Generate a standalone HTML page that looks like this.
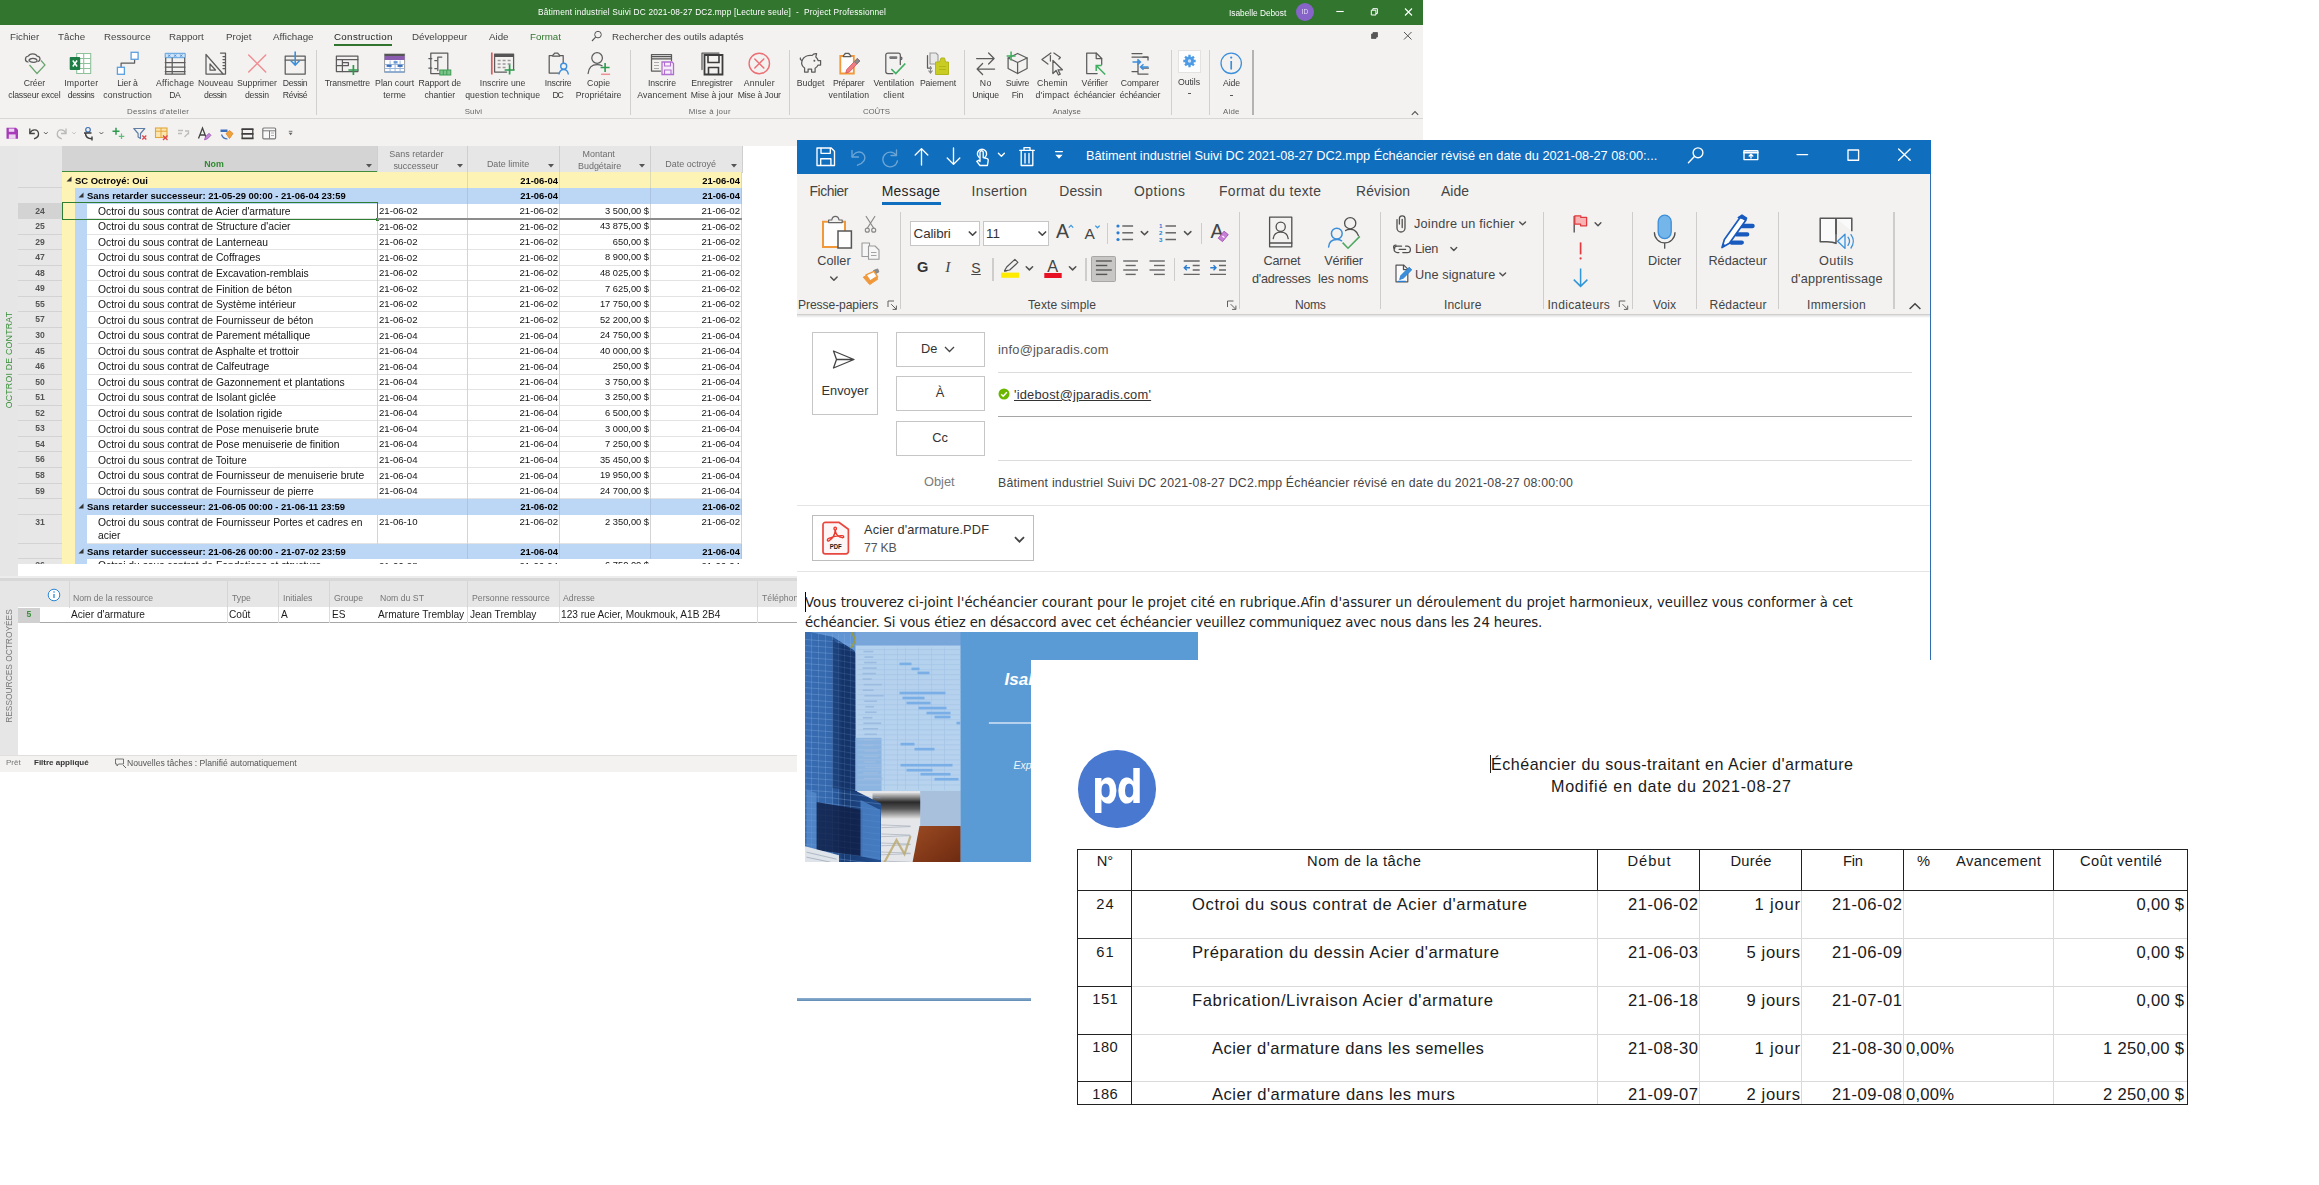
<!DOCTYPE html>
<html lang="fr"><head><meta charset="utf-8"><title>Échéancier sous-traitant</title>
<style>
*{box-sizing:border-box;margin:0;padding:0}
html,body{width:2319px;height:1185px;overflow:hidden;background:#fff}
body{position:relative;font-family:"Liberation Sans",sans-serif;color:#222}
.abs{position:absolute}
.t{position:absolute;white-space:pre;line-height:1}
.c{transform:translateX(-50%);text-align:center}
svg{position:absolute;overflow:visible}
/* ---------- Project ---------- */
#prj{position:absolute;left:0;top:0;width:1423px;height:772px;overflow:hidden;background:#fff;filter:blur(.35px)}
#prj .tb{position:absolute;left:0;top:0;width:1423px;height:25px;background:#31752f}
#prj .tabs{position:absolute;left:0;top:25px;width:1423px;height:23px;background:#f3f2f1}
#prj .rib{position:absolute;left:0;top:48px;width:1423px;height:71.4px;background:#f3f2f1;border-bottom:1.8px solid #d9d7d5}
#prj .qat{position:absolute;left:0;top:119px;width:1423px;height:27px;background:#f3f2f1}
.ptab{position:absolute;top:32.2px;font-size:9.75px;color:#444;white-space:pre;line-height:1}
.rl{position:absolute;font-size:8.6px;color:#555;white-space:pre;line-height:1;transform:translateX(-50%);text-align:center}
.gl{position:absolute;top:109px;font-size:7.6px;color:#666;white-space:pre;line-height:1;transform:translateX(-50%)}
.vsep{position:absolute;width:1px;background:#d2d0ce}
.row{position:absolute;left:18px;width:724px;height:15.56px}
.row .n{position:absolute;left:0;top:0;width:44px;height:100%;font-size:8.6px;font-weight:700;color:#555;text-align:center;line-height:14px;border-bottom:1px solid #d3d3d3}
.row .y{position:absolute;left:44px;top:0;width:13px;height:100%;background:#fdf3b5}
.row .b{position:absolute;left:57px;top:0;width:12px;height:100%;background:#bcd6f6}
.row .bd{position:absolute;left:69px;top:0;right:0;height:100%;border-bottom:1px solid #e3e3e3}
.row .nm,.row .d1,.row .d2,.row .m,.row .d3{position:absolute;top:2.2px;font-size:10.3px;line-height:11px;white-space:pre;color:#141414}
.row .nm{left:80px}
.row .d1,.row .d2,.row .d3{font-size:9.65px;top:1.5px}
.row .m{font-size:9.3px}
.row .d1{left:361px}
.row .d2{right:184px}
.row .m{right:93px}
.row .d3{right:2px}
.row .cl{position:absolute;top:0;width:1px;height:100%;background:#d4d4d4}
.grp{font-weight:700;font-size:9.45px !important;color:#000 !important;top:2.2px !important}
/* ---------- Outlook ---------- */
#olk{position:absolute;left:797px;top:140px;width:1134px;height:862px;overflow:hidden;background:#fff}
#olk .tb{position:absolute;left:0;top:0;width:1134px;height:34px;background:#106ebe}
#olk .tabs{position:absolute;left:0;top:34px;width:1134px;height:33px;background:#f3f2f1}
#olk .rib{position:absolute;left:0;top:67px;width:1134px;height:107.5px;background:#f3f2f1;border-bottom:1px solid #d0cecc}
#olk .ribsh{position:absolute;left:0;top:174.5px;width:1134px;height:3.5px;background:linear-gradient(rgba(0,0,0,.13),rgba(0,0,0,0))}
.otab{position:absolute;top:44.6px;font-size:13.9px;color:#444;white-space:pre;line-height:1}
.ol{position:absolute;font-size:12.6px;color:#444;white-space:pre;line-height:1}
.olc{transform:translateX(-50%);text-align:center}
.ogl{position:absolute;top:158.5px;font-size:12.2px;color:#444;white-space:pre;line-height:1;transform:translateX(-50%)}
.osep{position:absolute;top:80px;width:1px;height:84px;background:#d2d0ce}
.btn{position:absolute;border:1px solid #c6c6c6;background:#fff}
.hl{position:absolute;height:1px;background:#dcdcdc}
/* ---------- PDF ---------- */
#pdf{position:absolute;left:1031px;top:660px;width:1288px;height:525px;background:#fff;overflow:hidden}
.pt{position:absolute;white-space:pre;line-height:1;color:#1a1a1a}
</style></head><body>

<div id="prj">
<div class="tb"></div>
<div class="t c" style="left:712.09px;top:8.4px;font-size:8.3px;letter-spacing:0.18px;color:#fff">Bâtiment industriel Suivi DC 2021-08-27 DC2.mpp [Lecture seule]  -  Project Professionnel</div>
<div class="t" style="left:1229px;top:8.5px;font-size:8.3px;color:#fff">Isabelle Debost</div>
<div class="abs" style="left:1296px;top:3px;width:18px;height:18px;border-radius:50%;background:#8764c8"></div>
<div class="t c" style="left:1305px;top:8.8px;font-size:6.5px;color:#e8defa">ID</div>
<svg style="left:1334px;top:5px" width="84" height="14" viewBox="0 0 84 14"><path d="M2.300 6.500h7.400" stroke="#fff" stroke-width="1.100"/><path d="M37.300 5.200h4.600v4.800h-4.600z M38.800 5.200v-1.500h4.600v4.800h-1.500" fill="none" stroke="#fff" stroke-width="1"/><path d="M71 3.500l7 7M78 3.500l-7 7" stroke="#fff" stroke-width="1.100"/></svg>
<div class="tabs"></div>
<div class="ptab" style="left:10px">Fichier</div>
<div class="ptab" style="left:58px">Tâche</div>
<div class="ptab" style="left:104px">Ressource</div>
<div class="ptab" style="left:169px">Rapport</div>
<div class="ptab" style="left:226px">Projet</div>
<div class="ptab" style="left:273px">Affichage</div>
<div class="ptab" style="left:334px;color:#1e1e1e;letter-spacing:.33px">Construction</div>
<div class="ptab" style="left:412px">Développeur</div>
<div class="ptab" style="left:489px">Aide</div>
<div class="ptab" style="left:530px;color:#31752f">Format</div>
<div class="abs" style="left:334px;top:44px;width:58px;height:2px;background:#31752f"></div>
<svg style="left:591px;top:30px" width="12" height="12" viewBox="0 0 12 12"><circle cx="7" cy="4.6" r="3.3" fill="none" stroke="#555" stroke-width="1"/><path d="M4.6 7.2L1 11" stroke="#555" stroke-width="1.1"/></svg>
<div class="ptab" style="left:612px">Rechercher des outils adaptés</div>
<svg style="left:1369px;top:30px" width="48" height="12" viewBox="0 0 48 12"><path d="M2.5 4h4.5v4.5h-4.5z M4 4v-1.5h4.5v4.5h-1.5" fill="#555" stroke="#555" stroke-width=".8"/><path d="M35 2l7.5 7.5M42.5 2l-7.5 7.5" stroke="#555" stroke-width="1"/></svg>
<div class="rib"></div>
<div class="t c" style="left:34.46px;top:79.33px;font-size:8.7px;letter-spacing:-0.089px;color:#3a3a3a;font-weight:400">Créer</div>
<div class="t c" style="left:34.4px;top:91.33px;font-size:8.7px;letter-spacing:-0.209px;color:#3a3a3a;font-weight:400">classeur excel</div>
<div class="t c" style="left:81.31px;top:79.33px;font-size:8.7px;letter-spacing:0.23px;color:#3a3a3a;font-weight:400">Importer</div>
<div class="t c" style="left:80.99px;top:91.33px;font-size:8.7px;letter-spacing:-0.416px;color:#3a3a3a;font-weight:400">dessins</div>
<div class="t c" style="left:127.49px;top:79.33px;font-size:8.7px;letter-spacing:-0.213px;color:#3a3a3a;font-weight:400">Lier à</div>
<div class="t c" style="left:127.68px;top:91.33px;font-size:8.7px;letter-spacing:0.154px;color:#3a3a3a;font-weight:400">construction</div>
<div class="t c" style="left:175.12px;top:79.33px;font-size:8.7px;letter-spacing:0.235px;color:#3a3a3a;font-weight:400">Affichage</div>
<div class="t c" style="left:174.81px;top:91.33px;font-size:8.7px;letter-spacing:-0.386px;color:#3a3a3a;font-weight:400">DA</div>
<div class="t c" style="left:215.53px;top:79.33px;font-size:8.7px;letter-spacing:0.062px;color:#3a3a3a;font-weight:400">Nouveau</div>
<div class="t c" style="left:215.26px;top:91.33px;font-size:8.7px;letter-spacing:-0.47px;color:#3a3a3a;font-weight:400">dessin</div>
<div class="t c" style="left:256.99px;top:79.33px;font-size:8.7px;letter-spacing:-0.016px;color:#3a3a3a;font-weight:400">Supprimer</div>
<div class="t c" style="left:256.88px;top:91.33px;font-size:8.7px;letter-spacing:-0.23px;color:#3a3a3a;font-weight:400">dessin</div>
<div class="t c" style="left:295.02px;top:79.33px;font-size:8.7px;letter-spacing:-0.359px;color:#3a3a3a;font-weight:400">Dessin</div>
<div class="t c" style="left:295.02px;top:91.33px;font-size:8.7px;letter-spacing:-0.359px;color:#3a3a3a;font-weight:400">Révisé</div>
<div class="t c" style="left:347.35px;top:79.33px;font-size:8.7px;letter-spacing:-0.107px;color:#3a3a3a;font-weight:400">Transmettre</div>
<div class="t c" style="left:394.59px;top:79.33px;font-size:8.7px;letter-spacing:-0.019px;color:#3a3a3a;font-weight:400">Plan court</div>
<div class="t c" style="left:394.66px;top:91.33px;font-size:8.7px;letter-spacing:0.115px;color:#3a3a3a;font-weight:400">terme</div>
<div class="t c" style="left:439.77px;top:79.33px;font-size:8.7px;letter-spacing:-0.061px;color:#3a3a3a;font-weight:400">Rapport de</div>
<div class="t c" style="left:439.78px;top:91.33px;font-size:8.7px;letter-spacing:-0.05px;color:#3a3a3a;font-weight:400">chantier</div>
<div class="t c" style="left:502.62px;top:79.33px;font-size:8.7px;letter-spacing:0.031px;color:#3a3a3a;font-weight:400">Inscrire une</div>
<div class="t c" style="left:502.66px;top:91.33px;font-size:8.7px;letter-spacing:0.115px;color:#3a3a3a;font-weight:400">question technique</div>
<div class="t c" style="left:558.09px;top:79.33px;font-size:8.7px;letter-spacing:-0.217px;color:#3a3a3a;font-weight:400">Inscrire</div>
<div class="t c" style="left:557.57px;top:91.33px;font-size:8.7px;letter-spacing:-1.266px;color:#3a3a3a;font-weight:400">DC</div>
<div class="t c" style="left:598.63px;top:79.33px;font-size:8.7px;letter-spacing:0.067px;color:#3a3a3a;font-weight:400">Copie</div>
<div class="t c" style="left:598.64px;top:91.33px;font-size:8.7px;letter-spacing:0.075px;color:#3a3a3a;font-weight:400">Propriétaire</div>
<div class="t c" style="left:661.96px;top:79.33px;font-size:8.7px;letter-spacing:-0.075px;color:#3a3a3a;font-weight:400">Inscrire</div>
<div class="t c" style="left:662.07px;top:91.33px;font-size:8.7px;letter-spacing:0.144px;color:#3a3a3a;font-weight:400">Avancement</div>
<div class="t c" style="left:711.94px;top:79.33px;font-size:8.7px;letter-spacing:-0.115px;color:#3a3a3a;font-weight:400">Enregistrer</div>
<div class="t c" style="left:712.0px;top:91.33px;font-size:8.7px;letter-spacing:-0.005px;color:#3a3a3a;font-weight:400">Mise à jour</div>
<div class="t c" style="left:759.38px;top:79.33px;font-size:8.7px;letter-spacing:0.169px;color:#3a3a3a;font-weight:400">Annuler</div>
<div class="t c" style="left:759.22px;top:91.33px;font-size:8.7px;letter-spacing:-0.157px;color:#3a3a3a;font-weight:400">Mise à Jour</div>
<div class="t c" style="left:810.63px;top:79.33px;font-size:8.7px;letter-spacing:0.065px;color:#3a3a3a;font-weight:400">Budget</div>
<div class="t c" style="left:848.65px;top:79.33px;font-size:8.7px;letter-spacing:-0.307px;color:#3a3a3a;font-weight:400">Préparer</div>
<div class="t c" style="left:848.88px;top:91.33px;font-size:8.7px;letter-spacing:0.152px;color:#3a3a3a;font-weight:400">ventilation</div>
<div class="t c" style="left:893.83px;top:79.33px;font-size:8.7px;letter-spacing:0.055px;color:#3a3a3a;font-weight:400">Ventilation</div>
<div class="t c" style="left:893.87px;top:91.33px;font-size:8.7px;letter-spacing:0.138px;color:#3a3a3a;font-weight:400">client</div>
<div class="t c" style="left:937.97px;top:79.33px;font-size:8.7px;letter-spacing:-0.065px;color:#3a3a3a;font-weight:400">Paiement</div>
<div class="t c" style="left:985.89px;top:79.33px;font-size:8.7px;letter-spacing:0.579px;color:#3a3a3a;font-weight:400">No</div>
<div class="t c" style="left:985.53px;top:91.33px;font-size:8.7px;letter-spacing:-0.134px;color:#3a3a3a;font-weight:400">Unique</div>
<div class="t c" style="left:1017.5px;top:79.33px;font-size:8.7px;letter-spacing:-0.192px;color:#3a3a3a;font-weight:400">Suivre</div>
<div class="t c" style="left:1017.5px;top:91.33px;font-size:8.7px;letter-spacing:-0.193px;color:#3a3a3a;font-weight:400">Fin</div>
<div class="t c" style="left:1052.46px;top:79.33px;font-size:8.7px;letter-spacing:0.124px;color:#3a3a3a;font-weight:400">Chemin</div>
<div class="t c" style="left:1052.52px;top:91.33px;font-size:8.7px;letter-spacing:0.239px;color:#3a3a3a;font-weight:400">d'impact</div>
<div class="t c" style="left:1094.6px;top:79.33px;font-size:8.7px;letter-spacing:-0.194px;color:#3a3a3a;font-weight:400">Vérifier</div>
<div class="t c" style="left:1094.64px;top:91.33px;font-size:8.7px;letter-spacing:-0.129px;color:#3a3a3a;font-weight:400">échéancier</div>
<div class="t c" style="left:1139.99px;top:79.33px;font-size:8.7px;letter-spacing:-0.011px;color:#3a3a3a;font-weight:400">Comparer</div>
<div class="t c" style="left:1139.9px;top:91.33px;font-size:8.7px;letter-spacing:-0.207px;color:#3a3a3a;font-weight:400">échéancier</div>
<div class="t c" style="left:1231.43px;top:79.33px;font-size:8.7px;letter-spacing:-0.138px;color:#3a3a3a;font-weight:400">Aide</div>
<div class="t c" style="left:1188.98px;top:77.93px;font-size:8.7px;letter-spacing:-0.048px;color:#3a3a3a;font-weight:400">Outils</div>
<div class="t c" style="left:158.13px;top:108.18px;font-size:7.9px;letter-spacing:0.268px;color:#666;font-weight:400">Dessins d'atelier</div>
<div class="t c" style="left:473.32px;top:108.18px;font-size:7.9px;letter-spacing:0.044px;color:#666;font-weight:400">Suivi</div>
<div class="t c" style="left:709.87px;top:108.18px;font-size:7.9px;letter-spacing:0.336px;color:#666;font-weight:400">Mise à jour</div>
<div class="t c" style="left:876.42px;top:108.18px;font-size:7.9px;letter-spacing:-0.163px;color:#666;font-weight:400">COÛTS</div>
<div class="t c" style="left:1066.72px;top:108.18px;font-size:7.9px;letter-spacing:0.032px;color:#666;font-weight:400">Analyse</div>
<div class="t c" style="left:1231.31px;top:108.18px;font-size:7.9px;letter-spacing:0.229px;color:#666;font-weight:400">Aide</div>
<div class="vsep" style="left:316px;top:50px;height:65px"></div>
<div class="vsep" style="left:630px;top:50px;height:65px"></div>
<div class="vsep" style="left:788.6px;top:50px;height:65px"></div>
<div class="vsep" style="left:964.3px;top:50px;height:65px"></div>
<div class="vsep" style="left:1170.5px;top:50px;height:65px"></div>
<div class="vsep" style="left:1209px;top:50px;height:65px"></div>
<div class="vsep" style="left:1252.4px;top:50px;height:65px;background:#b5b3b1;width:1.3px"></div>
<div class="abs" style="left:1187.5px;top:93.3px;width:3.4px;height:1.1px;background:#555"></div><div class="abs" style="left:1230px;top:94.6px;width:3.4px;height:1.1px;background:#555"></div>
<svg style="left:1411px;top:110px" width="8" height="6" viewBox="0 0 8 6"><path d="M.8 4.800l3.200-3.200 3.200 3.200" stroke="#555" fill="none" stroke-width="1.100"/></svg>
<div class="abs" style="left:1178px;top:49.5px;width:23px;height:23px;background:#fdfdfd;border:1px solid #e4e2e0"></div>
<svg style="left:0;top:48px" width="1422" height="32" viewBox="0 48 1422 32"><g transform="translate(22.5 51.500)"><path d="M7 13.500l7.500 8.500 8-8.500-4-4.500" stroke="#6aa56e" fill="none" stroke-width="1.200"/><path d="M5.500 10.500c-3.500-.500-3.500-5.500.500-6 1-3 7.500-3 8.500 0 3.500 0 4 4.500 1 5.500" stroke="#5c5c5c" fill="none" stroke-width="1.250" stroke-linejoin="round" stroke-linecap="round"/><path d="M6.500 8.800c1-2.600 7-2.600 8 0s-7 2.800-8 0z" stroke="#5c5c5c" fill="none" stroke-width="1.250" stroke-linejoin="round" stroke-linecap="round" stroke-width="1.100"/></g><g transform="translate(69.2 51.500)"><path d="M7.500 2h14v20h-14z" fill="#fff" stroke="#8fc29b" stroke-width="1.100"/><path d="M7.500 7h14M7.500 12h14M7.500 17h14M14.500 2v20" stroke="#8fc29b" stroke-width="1.100"/><rect x=".5" y="5.500" width="10.500" height="13" rx="1" fill="#1d7d45"/><path d="M3.600 9l4.300 6M7.900 9l-4.300 6" stroke="#fff" stroke-width="1.500"/></g><g transform="translate(115.6 51.500)"><path d="M5.500 16v-4.500h13.500v-4" stroke="#5c5c5c" fill="none" stroke-width="1.250" stroke-linejoin="round" stroke-linecap="round"/><rect x="15.500" y=".8" width="7" height="7" fill="#fff" stroke="#5b9fe0" stroke-width="1.300"/><rect x="1.800" y="15.800" width="7" height="7" fill="#fff" stroke="#5b9fe0" stroke-width="1.300"/></g><g transform="translate(163.2 51.500)"><path d="M2 1.800h20v4.400h-20z" fill="#cfe3f7" stroke="#5b9fe0" stroke-width="1"/><path d="M5 3l2 2.200M7 3l-2 2.200M11 3l2 2.200M13 3l-2 2.200M17 3l2 2.200M19 3l-2 2.200" stroke="#3b82d0" stroke-width=".9"/><path d="M2.500 6.500v16M21.500 6.500v16M9 6.500v16M2 11h20M2 15.500h20M2 20h20M2 22.500h20" stroke="#5c5c5c" fill="none" stroke-width="1.250" stroke-linejoin="round" stroke-linecap="round" stroke-width="1.150"/></g><g transform="translate(203.5 51.500)"><path d="M2.500 3v19.500h17z" stroke="#5c5c5c" fill="none" stroke-width="1.250" stroke-linejoin="round" stroke-linecap="round" stroke-width="1.500"/><path d="M6.500 12.500v6h5.500z" stroke="#5c5c5c" fill="none" stroke-width="1.250" stroke-linejoin="round" stroke-linecap="round" stroke-width="1.200" fill="#999"/><path d="M17 1.500h5v21h-2.500M19.500 5h2.500M19.500 8h2.500M19.500 11h2.500M19.500 14h2.500M19.500 17h2.500" stroke="#5c5c5c" fill="none" stroke-width="1.250" stroke-linejoin="round" stroke-linecap="round" stroke-width="1"/></g><g transform="translate(245.2 51.500)"><path d="M3.500 3.500l17 17M20.500 3.500l-17 17" stroke="#ee8f93" stroke-width="1.500" stroke-linecap="round"/></g><g transform="translate(283.2 51.500)"><path d="M2 4.500h20v18h-20z" stroke="#5c5c5c" fill="none" stroke-width="1.250" stroke-linejoin="round" stroke-linecap="round" stroke="#4a4a4a" stroke-width="1.500"/><path d="M2 8.500h20" stroke="#5c5c5c" fill="none" stroke-width="1.250" stroke-linejoin="round" stroke-linecap="round" stroke-width="1"/><path d="M12 0v13M7.500 9l4.500 4.500 4.500-4.500" stroke="#3d8fdc" fill="none" stroke-width="1.600"/></g><g transform="translate(335.4 51.500)"><path d="M1 4.500h21.500v15.500h-21.500z" stroke="#5c5c5c" fill="none" stroke-width="1.250" stroke-linejoin="round" stroke-linecap="round" stroke-width="1.400"/><path d="M1 8h21.500M1 14h12M7 8v12M7 11h6v3" stroke="#5c5c5c" fill="none" stroke-width="1.250" stroke-linejoin="round" stroke-linecap="round" stroke-width="1"/><path d="M18 13.500v10M13 18.500h10" stroke="#2e9a4d" stroke-width="1.700"/></g><g transform="translate(382.6 51.500)"><rect x="2" y="2.500" width="20" height="18" fill="#fff" stroke="#9b9b9b" stroke-width="1"/><rect x="2" y="2.500" width="20" height="2" fill="#555"/><rect x="2" y="4.500" width="20" height="4" fill="#8a5db0"/><path d="M2 13h20M2 17h20M7.500 9v11M12.500 9v11M17.500 9v11" stroke="#9db8dc" stroke-width="1"/><rect x="4" y="13.200" width="5" height="2.200" fill="#3d6fb8"/><rect x="11" y="9.600" width="4" height="2.400" fill="#6a9ad6"/><rect x="15" y="13.200" width="5" height="2.200" fill="#3d6fb8"/><path d="M2 20.500h20" stroke="#6a9ad6" stroke-width="1.200"/></g><g transform="translate(427.8 51.500)"><path d="M3 1.500h17v17M3 1.500v20.500h9" stroke="#5c5c5c" fill="none" stroke-width="1.250" stroke-linejoin="round" stroke-linecap="round" stroke="#444" stroke-width="1.500"/><path d="M1 7h3M1 16.500h3" stroke="#5c5c5c" fill="none" stroke-width="1.250" stroke-linejoin="round" stroke-linecap="round" stroke="#444" stroke-width="1.500"/><path d="M14 5.500h-4v13.500" stroke="#5c5c5c" fill="none" stroke-width="1.250" stroke-linejoin="round" stroke-linecap="round" stroke="#444" stroke-width="1.400"/><path d="M7 9h2M7 17h2" stroke="#5c5c5c" fill="none" stroke-width="1.250" stroke-linejoin="round" stroke-linecap="round" stroke-width=".9"/><rect x="12" y="18.500" width="11" height="5" fill="#7cc48a" stroke="#3a9b52" stroke-width="1"/><path d="M15.500 18.500v5M19 18.500v5" stroke="#3a9b52" stroke-width=".9"/></g><g transform="translate(490.6 51.500)"><path d="M1.200 1v22" stroke="#e0575b" stroke-width="1.700"/><path d="M4 2.500h19v15.500M4 2.500v18h12" stroke="#5c5c5c" fill="none" stroke-width="1.250" stroke-linejoin="round" stroke-linecap="round" stroke-width="1.300"/><rect x="4" y="2.500" width="19" height="3" fill="#555"/><path d="M7 9h3M12 9h3M17 9h3M7 12.500h3M12 12.500h3M17 12.500h3M7 16h3M12 16h3" stroke="#9a9a9a" stroke-width="1.300"/><path d="M19 13v10M14 18.500h10" stroke="#2e9a4d" stroke-width="1.700"/></g><g transform="translate(546.2 51.500)"><path d="M3 4h14v17.500h-14z" stroke="#5c5c5c" fill="none" stroke-width="1.250" stroke-linejoin="round" stroke-linecap="round" stroke-width="1.400"/><path d="M6.500 4.500c0-2 1.500-1.500 2-3h3c.5 1.500 2 1 2 3z" fill="#f3f2f1" stroke="#5c5c5c" fill="none" stroke-width="1.250" stroke-linejoin="round" stroke-linecap="round" stroke-width="1.200"/><circle cx="17.500" cy="14.800" r="3" fill="#f3f2f1" stroke="#3d8fdc" stroke-width="1.400"/><path d="M12.800 23c.500-3.500 2.500-5 4.700-5s4.200 1.500 4.700 5" fill="#f3f2f1" stroke="#3d8fdc" stroke-width="1.400"/></g><g transform="translate(586.6 51.500)"><circle cx="10.500" cy="6.500" r="5.300" stroke="#5c5c5c" fill="none" stroke-width="1.250" stroke-linejoin="round" stroke-linecap="round" stroke-width="1.350"/><path d="M1.500 22c.5-6 4-9 9-9 2 0 3.500.4 5 1.300" stroke="#5c5c5c" fill="none" stroke-width="1.250" stroke-linejoin="round" stroke-linecap="round" stroke-width="1.350"/><path d="M18.500 11.500v9M14 16h9" stroke="#2e9a4d" stroke-width="1.600"/><path d="M14.500 22.800h9" stroke="#ee8f93" stroke-width="1.500"/></g><g transform="translate(650 51.500)"><path d="M1.500 3h20v6M1.500 3v16.500h9" stroke="#5c5c5c" fill="none" stroke-width="1.250" stroke-linejoin="round" stroke-linecap="round" stroke-width="1.300"/><path d="M1.500 5.200h20M1.500 7.400h20" stroke="#555" stroke-width="1.300"/><path d="M4 11h5M4 14h5M4 17h5" stroke="#aaa" stroke-width="1.100"/><path d="M12 10.500h10l1.500 1.500v11h-11.500z" fill="#f7eefb" stroke="#b06fd0" stroke-width="1.300"/><path d="M14.500 10.500v4h6v-4M14.500 23v-4.500h6.500v4.500" stroke="#b06fd0" fill="none" stroke-width="1.100"/></g><g transform="translate(700 51.500)"><path d="M2 18v-16.500h17" stroke="#5c5c5c" fill="none" stroke-width="1.250" stroke-linejoin="round" stroke-linecap="round" stroke="#555" stroke-width="1.400"/><path d="M4.500 3.500h18v19.500h-18z" fill="#f3f2f1" stroke="#3c3c3c" stroke-width="1.800"/><path d="M8 4v7h11v-7M8.500 22.500v-6.500h10v6.500" stroke="#3c3c3c" fill="none" stroke-width="1.600"/></g><g transform="translate(747.3 51.500)"><circle cx="12" cy="12" r="10.200" fill="none" stroke="#ec6f74" stroke-width="1.400"/><path d="M7.500 7.500l9 9M16.500 7.500l-9 9" stroke="#ec6f74" stroke-width="1.500" stroke-linecap="round"/></g><g transform="translate(798.6 51.500)"><path d="M3.500 9c1.500-4 6-5.500 10-5 1-1.500 2.800-2 4.500-1.800l-.8 3.300c1.300 1 2 2.400 2.300 3.500h2.500v4.500h-2.500c-.7 1.500-1.700 2.500-3 3.200v3.800h-3.500v-2.800h-3.500v2.800h-3.500v-4c-2.500-1.700-3.500-4.500-2.500-7.500z" stroke="#5c5c5c" fill="none" stroke-width="1.250" stroke-linejoin="round" stroke-linecap="round" stroke-width="1.350"/><circle cx="15.800" cy="9.300" r="1" fill="#5c5c5c"/><path d="M3.300 9c-1-.3-1.800-1.200-1.500-2.500" stroke="#5c5c5c" fill="none" stroke-width="1.250" stroke-linejoin="round" stroke-linecap="round" stroke-width="1.100"/></g><g transform="translate(836.8 51.500)"><path d="M3.500 4.500h13.500v17.500h-13.500z" fill="#fdfdfd" stroke="#f0983a" stroke-width="1.800"/><path d="M6.500 5c0-2 1.500-1.500 2-3.200h3.500c.5 1.700 2 1.200 2 3.200z" fill="#f3f2f1" stroke="#5c5c5c" fill="none" stroke-width="1.250" stroke-linejoin="round" stroke-linecap="round" stroke-width="1.100"/><path d="M9 21.500l1-3.500 10.500-11 2.500 2.500-10.500 11z" fill="#ee7d82" stroke="#d9585e" stroke-width=".9"/><path d="M17.500 10l3-3 2.500 2.500-3 3z" fill="#8a8a8a" stroke="#777" stroke-width=".8"/></g><g transform="translate(881.8 51.500)"><path d="M18.500 13v-9.500a2 2 0 0 0-2-2h-10.500a2 2 0 0 0-2 2v16.500a2 2 0 0 0 2 2h5" stroke="#5c5c5c" fill="none" stroke-width="1.250" stroke-linejoin="round" stroke-linecap="round" stroke="#4a4a4a" stroke-width="1.600"/><rect x="7.500" y="4.800" width="8" height="2.600" rx=".8" fill="#777"/><path d="M19 5.500c1.500 0 1.500 2.500 0 2.500" stroke="#5c5c5c" fill="none" stroke-width="1.250" stroke-linejoin="round" stroke-linecap="round" stroke-width="1.200"/><path d="M9.500 17.500l4.500 4.500 9.500-10" stroke="#3fae5f" fill="none" stroke-width="1.700"/></g><g transform="translate(926 51.500)"><path d="M4 1.500h6l2 2v9h-8z" fill="#e9e9e9" stroke="#9a9a9a" stroke-width="1.100"/><path d="M1.500 4v12.500h4" stroke="#5c5c5c" fill="none" stroke-width="1.250" stroke-linejoin="round" stroke-linecap="round" stroke="#9a9a9a" stroke-width="1.100"/><path d="M4.500 14.500v6.500M2.500 19l2 2.500 2-2.500" stroke="#8a8a8a" fill="none" stroke-width="1.200"/><path d="M9.500 10.500h4l1.500-4h3.500l1 4h3v12.500h-13z" fill="#c9cc22" stroke="#b3b61a" stroke-width="1"/><path d="M13 15h7M13 18h7" stroke="#b3b61a" stroke-width="1"/></g><g transform="translate(973.6 51.500)"><path d="M3 7h17.500M15 1.500l5.500 5.500-5.500 5.500" stroke="#5c5c5c" fill="none" stroke-width="1.250" stroke-linejoin="round" stroke-linecap="round" stroke="#444" stroke-width="1.500"/><path d="M21 17.500h-17.500M9 12l-5.500 5.500 5.500 5.500" stroke="#5c5c5c" fill="none" stroke-width="1.250" stroke-linejoin="round" stroke-linecap="round" stroke="#444" stroke-width="1.500"/></g><g transform="translate(1005.6 51.500)"><path d="M12 2l9.500 4.500v10.500l-9.500 5-9.500-5v-10.500z" stroke="#5c5c5c" fill="none" stroke-width="1.250" stroke-linejoin="round" stroke-linecap="round" stroke-width="1.350"/><path d="M2.500 6.500l9.500 4.500 9.500-4.500M12 11v11" stroke="#5c5c5c" fill="none" stroke-width="1.250" stroke-linejoin="round" stroke-linecap="round" stroke-width="1.350"/><path d="M5.500 0v9M1 4.500h9" stroke="#3fae5f" stroke-width="1.500"/></g><g transform="translate(1040.4 51.500)"><path d="M10.500 1.500l-9 6.500 6 4.500M13.500 1.500l6.500 4.500-1.500 1.500" stroke="#5c5c5c" fill="none" stroke-width="1.250" stroke-linejoin="round" stroke-linecap="round" stroke="#8a8a8a" stroke-width="1.200"/><path d="M10 4v5.500" stroke="#5c5c5c" fill="none" stroke-width="1.250" stroke-linejoin="round" stroke-linecap="round" stroke="#8a8a8a" stroke-width="1.100"/><path d="M12.500 9v13l3.200-3 2.300 4.500 1.800-.9-2.200-4.300h4.400z" fill="#f3f2f1" stroke="#5c5c5c" fill="none" stroke-width="1.250" stroke-linejoin="round" stroke-linecap="round" stroke-width="1.250"/></g><g transform="translate(1082.7 51.500)"><path d="M4 1.500h9.500l5.500 5.500v6M4 1.500v20.500h10.500" stroke="#5c5c5c" fill="none" stroke-width="1.250" stroke-linejoin="round" stroke-linecap="round" stroke="#8a8a8a" stroke-width="1.350"/><path d="M13.500 1.500v5.500h5.500" stroke="#5c5c5c" fill="none" stroke-width="1.250" stroke-linejoin="round" stroke-linecap="round" stroke="#8a8a8a" stroke-width="1.100"/><path d="M22.500 23l-9-9M13.500 19.500v-5.500h5.500" stroke="#3fae5f" fill="none" stroke-width="1.500"/></g><g transform="translate(1128 51.500)"><path d="M4 2h10M4 5.500h16M10 9v13.500h10M4 20h6" stroke="#5c5c5c" fill="none" stroke-width="1.250" stroke-linejoin="round" stroke-linecap="round" stroke="#9a9a9a" stroke-width="1.100"/><path d="M15 5.500h5v3M14 16.500h6.500" stroke="#5c5c5c" fill="none" stroke-width="1.250" stroke-linejoin="round" stroke-linecap="round" stroke="#9a9a9a" stroke-width="1.100"/><path d="M4.500 10.500h8M9.500 7.800l3 2.700-3 2.700" stroke="#3d8fdc" fill="none" stroke-width="1.400"/><path d="M20.500 15.500h-8M15.500 12.800l-3 2.700 3 2.700" stroke="#3d8fdc" fill="none" stroke-width="1.400"/></g><g transform="translate(1189.500 61)"><circle r="4.600" fill="#4d9be6"/><g stroke="#4d9be6" stroke-width="2.300"><path d="M0-6.200v12.400M-6.200 0h12.400M-4.400-4.400l8.800 8.800M4.400-4.400l-8.800 8.800"/></g><circle r="1.700" fill="#cfe3f7"/></g><circle cx="1231.200" cy="63.300" r="10.200" fill="none" stroke="#3d8fdc" stroke-width="1.300"/><path d="M1231.200 61v8.500" stroke="#3d8fdc" stroke-width="1.700"/><circle cx="1231.200" cy="57.600" r="1.100" fill="#3d8fdc"/></svg>
<div class="qat"></div>
<svg style="left:0;top:119px" width="320" height="27" viewBox="0 119 320 27"><path d="M6.500 127.800h9.500l2 2v9h-11.500z" fill="#a63ab8"/><rect x="8.800" y="128.600" width="5.500" height="3.200" fill="#ecd2f1"/><rect x="8.800" y="134.400" width="6.800" height="4.400" fill="#ecd2f1"/><path d="M29.800 128.500v5h5" stroke="#444" fill="none" stroke-width="1.300"/><path d="M30 133.300c2-4.800 8-4.200 8.500.2.300 2.600-1.800 4.500-4.500 5.300" stroke="#444" fill="none" stroke-width="1.300"/><path d="M44 132.200l1.800 1.800 1.800-1.800" stroke="#555" fill="none" stroke-width="1"/><path d="M66 128.500v5h-5" stroke="#b9b9b9" fill="none" stroke-width="1.300"/><path d="M65.800 133.300c-2-4.800-8-4.200-8.500.2-.3 2.600 1.800 4.500 4.500 5.300" stroke="#b9b9b9" fill="none" stroke-width="1.300"/><path d="M72.200 132.200l1.800 1.800 1.800-1.800" stroke="#c4c4c4" fill="none" stroke-width="1"/><circle cx="88" cy="129.800" r="2.300" fill="#f3f2f1" stroke="#3d6fb8" stroke-width="1.200"/><path d="M84 133h7.500M85.500 133c0 4 2 5.800 6.500 5.800M92 136.600v4" stroke="#3c3c3c" fill="none" stroke-width="1.400"/><path d="M99.600 132.200l1.800 1.800 1.800-1.800" stroke="#555" fill="none" stroke-width="1"/><path d="M116 127.800v7M112.500 131.300h7" stroke="#2e9a4d" stroke-width="1.500"/><path d="M121.500 133.500v5.500M118.800 136.300h5.500" stroke="#5fbf78" stroke-width="1.200"/><path d="M133.800 128.500h11l-4.300 5v5l-2.400-1.500v-3.500z" fill="none" stroke="#5f7fa6" stroke-width="1.200" stroke-linejoin="round"/><path d="M142.300 135.500l4 4M146.300 135.500l-4 4" stroke="#e0474c" stroke-width="1.300"/><rect x="155.500" y="128" width="11.500" height="9.500" fill="#fbe6b0" stroke="#e2a63a" stroke-width="1.100"/><path d="M155.500 131.200h11.500M161 128v9.500" stroke="#e2a63a" stroke-width="1"/><path d="M163 135.500l4.500 4.500M167.500 135.500l-4.500 4.500" stroke="#e0474c" stroke-width="1.300"/><path d="M178 130.500h5M178 133.500h4M185 131h3.500v3.500M184.500 137l4-4" stroke="#bdbdbd" fill="none" stroke-width="1.300"/><path d="M198.500 138.500l4-10.500 4 10.500M200 135h5" stroke="#444" fill="none" stroke-width="1.300"/><path d="M204.500 139.800l1-3 3.500-3.500 2 2-3.500 3.500z" fill="#c58ad6" stroke="#9a4db5" stroke-width=".8"/><path d="M220.500 129.500h7v2.500h-7z" fill="#3d6fb8"/><path d="M226 133.500l3.500-3 3.500 3-3.500 5z" fill="#f0a23a" stroke="#d9842a" stroke-width=".8"/><path d="M221.500 134.500c1 3 3.500 4.500 6 4.500" stroke="#3d6fb8" fill="none" stroke-width="1.200"/><path d="M241.500 129.200h12M241.500 133.800h12M241.500 138.400h12" stroke="#3c3c3c" stroke-width="1.700"/><path d="M242.200 129v9.500M252.800 129v9.500" stroke="#3c3c3c" stroke-width="1.200"/><rect x="262.800" y="128" width="12.800" height="10.800" rx="1" fill="#f8f8f8" stroke="#7a7a7a" stroke-width="1.200"/><path d="M262.800 130.800h12.800M269.500 130.800v8" stroke="#7a7a7a" stroke-width="1"/><path d="M271 133h3M271 135.500h3" stroke="#9a9a9a" stroke-width=".8"/><path d="M288.800 131.300h3.600" stroke="#666" stroke-width=".9"/><path d="M288.600 132.800h4l-2 2.400z" fill="#666"/></svg>
<div class="abs" style="left:0;top:146px;width:18px;height:609px;background:#e6e6e6"></div>
<div class="abs" style="left:18px;top:146px;width:44px;height:418.5px;background:#e7e7e7"></div>
<div class="t" style="left:9px;top:360px;font-size:8.8px;color:#3a8f3a;letter-spacing:.2px;transform:translate(-50%,-50%) rotate(-90deg)">OCTROI DE CONTRAT</div>
<div class="t" style="left:9px;top:666px;font-size:8.4px;color:#7a7a7a;letter-spacing:0;transform:translate(-50%,-50%) rotate(-90deg)">RESSOURCES OCTROYÉES</div>
<div class="abs" style="left:62px;top:146px;width:315px;height:27px;background:#d4d4d4;border-bottom:2px solid #3f8a3d"></div>
<div class="abs" style="left:377px;top:146px;width:365px;height:27px;background:#e6e6e6;border-bottom:1px solid #bdbdbd"></div>
<div class="abs" style="left:377px;top:146px;width:1px;height:27px;background:#cfcfcf"></div>
<div class="abs" style="left:467px;top:146px;width:1px;height:27px;background:#cfcfcf"></div>
<div class="abs" style="left:559px;top:146px;width:1px;height:27px;background:#cfcfcf"></div>
<div class="abs" style="left:650px;top:146px;width:1px;height:27px;background:#cfcfcf"></div>
<div class="abs" style="left:742px;top:146px;width:1px;height:27px;background:#cfcfcf"></div>
<div class="t c" style="left:214px;top:160px;font-size:8.8px;font-weight:700;color:#2f8a32">Nom</div>
<div class="t c" style="left:416.4px;top:150.2px;font-size:8.95px;color:#6c6c6c">Sans retarder</div>
<div class="t c" style="left:416px;top:161.6px;font-size:8.95px;color:#6c6c6c">successeur</div>
<div class="t c" style="left:508px;top:160px;font-size:8.95px;color:#6c6c6c">Date limite</div>
<div class="t c" style="left:598.7px;top:150.2px;font-size:8.95px;color:#6c6c6c">Montant</div>
<div class="t c" style="left:599.6px;top:161.6px;font-size:8.95px;color:#6c6c6c">Budgétaire</div>
<div class="t c" style="left:690.7px;top:160px;font-size:8.95px;color:#6c6c6c">Date octroyé</div>
<svg style="left:366px;top:164px" width="6" height="4" viewBox="0 0 6 4"><path d="M0 0h6L3 3.6z" fill="#555"/></svg>
<svg style="left:457px;top:164px" width="6" height="4" viewBox="0 0 6 4"><path d="M0 0h6L3 3.6z" fill="#555"/></svg>
<svg style="left:548px;top:164px" width="6" height="4" viewBox="0 0 6 4"><path d="M0 0h6L3 3.6z" fill="#555"/></svg>
<svg style="left:639px;top:164px" width="6" height="4" viewBox="0 0 6 4"><path d="M0 0h6L3 3.6z" fill="#555"/></svg>
<svg style="left:731px;top:164px" width="6" height="4" viewBox="0 0 6 4"><path d="M0 0h6L3 3.6z" fill="#555"/></svg>
<div class="row" style="top:172.4px;height:15.56px"><div class="n"></div><div class="abs" style="left:44px;top:0;right:0;height:100%;background:#fdf3b5"></div><svg style="left:48px;top:4px" width="6" height="6" viewBox="0 0 6 6"><path d="M5.5 .5v5h-5z" fill="#333"/></svg><div class="nm grp" style="left:57px">SC Octroyé: Oui</div><div class="d2 grp">21-06-04</div><div class="d3 grp">21-06-04</div><div class="cl" style="left:449px;background:rgba(120,130,150,.22)"></div><div class="cl" style="left:541px;background:rgba(120,130,150,.22)"></div><div class="cl" style="left:632px;background:rgba(120,130,150,.22)"></div><div class="cl" style="left:723px;background:rgba(120,130,150,.22)"></div></div>
<div class="row" style="top:187.96px;height:15.56px"><div class="n"></div><div class="y"></div><div class="abs" style="left:57px;top:0;right:0;height:100%;background:#bcd6f6"></div><svg style="left:60px;top:4px" width="6" height="6" viewBox="0 0 6 6"><path d="M5.5 .5v5h-5z" fill="#333"/></svg><div class="nm grp" style="left:69px">Sans retarder successeur: 21-05-29 00:00 - 21-06-04 23:59</div><div class="d2 grp">21-06-04</div><div class="d3 grp">21-06-04</div><div class="cl" style="left:449px;background:rgba(120,130,150,.22)"></div><div class="cl" style="left:541px;background:rgba(120,130,150,.22)"></div><div class="cl" style="left:632px;background:rgba(120,130,150,.22)"></div><div class="cl" style="left:723px;background:rgba(120,130,150,.22)"></div></div>
<div class="row" style="top:203.52px;height:15.56px"><div class="n" style="background:#d3d3d3">24</div><div class="y"></div><div class="b"></div><div class="bd"></div><div class="cl" style="left:359px"></div><div class="cl" style="left:449px"></div><div class="cl" style="left:541px"></div><div class="cl" style="left:632px"></div><div class="cl" style="left:723px"></div><div class="nm">Octroi du sous contrat de Acier d'armature</div><div class="d1">21-06-02</div><div class="d2">21-06-02</div><div class="m">3 500,00 $</div><div class="d3">21-06-02</div></div>
<div class="row" style="top:219.08px;height:15.56px"><div class="n">25</div><div class="y"></div><div class="b"></div><div class="bd"></div><div class="cl" style="left:359px"></div><div class="cl" style="left:449px"></div><div class="cl" style="left:541px"></div><div class="cl" style="left:632px"></div><div class="cl" style="left:723px"></div><div class="nm">Octroi du sous contrat de Structure d'acier</div><div class="d1">21-06-02</div><div class="d2">21-06-02</div><div class="m">43 875,00 $</div><div class="d3">21-06-02</div></div>
<div class="row" style="top:234.64px;height:15.56px"><div class="n">29</div><div class="y"></div><div class="b"></div><div class="bd"></div><div class="cl" style="left:359px"></div><div class="cl" style="left:449px"></div><div class="cl" style="left:541px"></div><div class="cl" style="left:632px"></div><div class="cl" style="left:723px"></div><div class="nm">Octroi du sous contrat de Lanterneau</div><div class="d1">21-06-02</div><div class="d2">21-06-02</div><div class="m">650,00 $</div><div class="d3">21-06-02</div></div>
<div class="row" style="top:250.2px;height:15.56px"><div class="n">47</div><div class="y"></div><div class="b"></div><div class="bd"></div><div class="cl" style="left:359px"></div><div class="cl" style="left:449px"></div><div class="cl" style="left:541px"></div><div class="cl" style="left:632px"></div><div class="cl" style="left:723px"></div><div class="nm">Octroi du sous contrat de Coffrages</div><div class="d1">21-06-02</div><div class="d2">21-06-02</div><div class="m">8 900,00 $</div><div class="d3">21-06-02</div></div>
<div class="row" style="top:265.76px;height:15.56px"><div class="n">48</div><div class="y"></div><div class="b"></div><div class="bd"></div><div class="cl" style="left:359px"></div><div class="cl" style="left:449px"></div><div class="cl" style="left:541px"></div><div class="cl" style="left:632px"></div><div class="cl" style="left:723px"></div><div class="nm">Octroi du sous contrat de Excavation-remblais</div><div class="d1">21-06-02</div><div class="d2">21-06-02</div><div class="m">48 025,00 $</div><div class="d3">21-06-02</div></div>
<div class="row" style="top:281.32px;height:15.56px"><div class="n">49</div><div class="y"></div><div class="b"></div><div class="bd"></div><div class="cl" style="left:359px"></div><div class="cl" style="left:449px"></div><div class="cl" style="left:541px"></div><div class="cl" style="left:632px"></div><div class="cl" style="left:723px"></div><div class="nm">Octroi du sous contrat de Finition de béton</div><div class="d1">21-06-02</div><div class="d2">21-06-02</div><div class="m">7 625,00 $</div><div class="d3">21-06-02</div></div>
<div class="row" style="top:296.88px;height:15.56px"><div class="n">55</div><div class="y"></div><div class="b"></div><div class="bd"></div><div class="cl" style="left:359px"></div><div class="cl" style="left:449px"></div><div class="cl" style="left:541px"></div><div class="cl" style="left:632px"></div><div class="cl" style="left:723px"></div><div class="nm">Octroi du sous contrat de Système intérieur</div><div class="d1">21-06-02</div><div class="d2">21-06-02</div><div class="m">17 750,00 $</div><div class="d3">21-06-02</div></div>
<div class="row" style="top:312.44px;height:15.56px"><div class="n">57</div><div class="y"></div><div class="b"></div><div class="bd"></div><div class="cl" style="left:359px"></div><div class="cl" style="left:449px"></div><div class="cl" style="left:541px"></div><div class="cl" style="left:632px"></div><div class="cl" style="left:723px"></div><div class="nm">Octroi du sous contrat de Fournisseur de béton</div><div class="d1">21-06-02</div><div class="d2">21-06-02</div><div class="m">52 200,00 $</div><div class="d3">21-06-02</div></div>
<div class="row" style="top:328.0px;height:15.56px"><div class="n">30</div><div class="y"></div><div class="b"></div><div class="bd"></div><div class="cl" style="left:359px"></div><div class="cl" style="left:449px"></div><div class="cl" style="left:541px"></div><div class="cl" style="left:632px"></div><div class="cl" style="left:723px"></div><div class="nm">Octroi du sous contrat de Parement métallique</div><div class="d1">21-06-04</div><div class="d2">21-06-04</div><div class="m">24 750,00 $</div><div class="d3">21-06-04</div></div>
<div class="row" style="top:343.56px;height:15.56px"><div class="n">45</div><div class="y"></div><div class="b"></div><div class="bd"></div><div class="cl" style="left:359px"></div><div class="cl" style="left:449px"></div><div class="cl" style="left:541px"></div><div class="cl" style="left:632px"></div><div class="cl" style="left:723px"></div><div class="nm">Octroi du sous contrat de Asphalte et trottoir</div><div class="d1">21-06-04</div><div class="d2">21-06-04</div><div class="m">40 000,00 $</div><div class="d3">21-06-04</div></div>
<div class="row" style="top:359.12px;height:15.56px"><div class="n">46</div><div class="y"></div><div class="b"></div><div class="bd"></div><div class="cl" style="left:359px"></div><div class="cl" style="left:449px"></div><div class="cl" style="left:541px"></div><div class="cl" style="left:632px"></div><div class="cl" style="left:723px"></div><div class="nm">Octroi du sous contrat de Calfeutrage</div><div class="d1">21-06-04</div><div class="d2">21-06-04</div><div class="m">250,00 $</div><div class="d3">21-06-04</div></div>
<div class="row" style="top:374.68px;height:15.56px"><div class="n">50</div><div class="y"></div><div class="b"></div><div class="bd"></div><div class="cl" style="left:359px"></div><div class="cl" style="left:449px"></div><div class="cl" style="left:541px"></div><div class="cl" style="left:632px"></div><div class="cl" style="left:723px"></div><div class="nm">Octroi du sous contrat de Gazonnement et plantations</div><div class="d1">21-06-04</div><div class="d2">21-06-04</div><div class="m">3 750,00 $</div><div class="d3">21-06-04</div></div>
<div class="row" style="top:390.24px;height:15.56px"><div class="n">51</div><div class="y"></div><div class="b"></div><div class="bd"></div><div class="cl" style="left:359px"></div><div class="cl" style="left:449px"></div><div class="cl" style="left:541px"></div><div class="cl" style="left:632px"></div><div class="cl" style="left:723px"></div><div class="nm">Octroi du sous contrat de Isolant giclée</div><div class="d1">21-06-04</div><div class="d2">21-06-04</div><div class="m">3 250,00 $</div><div class="d3">21-06-04</div></div>
<div class="row" style="top:405.8px;height:15.56px"><div class="n">52</div><div class="y"></div><div class="b"></div><div class="bd"></div><div class="cl" style="left:359px"></div><div class="cl" style="left:449px"></div><div class="cl" style="left:541px"></div><div class="cl" style="left:632px"></div><div class="cl" style="left:723px"></div><div class="nm">Octroi du sous contrat de Isolation rigide</div><div class="d1">21-06-04</div><div class="d2">21-06-04</div><div class="m">6 500,00 $</div><div class="d3">21-06-04</div></div>
<div class="row" style="top:421.36px;height:15.56px"><div class="n">53</div><div class="y"></div><div class="b"></div><div class="bd"></div><div class="cl" style="left:359px"></div><div class="cl" style="left:449px"></div><div class="cl" style="left:541px"></div><div class="cl" style="left:632px"></div><div class="cl" style="left:723px"></div><div class="nm">Octroi du sous contrat de Pose menuiserie brute</div><div class="d1">21-06-04</div><div class="d2">21-06-04</div><div class="m">3 000,00 $</div><div class="d3">21-06-04</div></div>
<div class="row" style="top:436.92px;height:15.56px"><div class="n">54</div><div class="y"></div><div class="b"></div><div class="bd"></div><div class="cl" style="left:359px"></div><div class="cl" style="left:449px"></div><div class="cl" style="left:541px"></div><div class="cl" style="left:632px"></div><div class="cl" style="left:723px"></div><div class="nm">Octroi du sous contrat de Pose menuiserie de finition</div><div class="d1">21-06-04</div><div class="d2">21-06-04</div><div class="m">7 250,00 $</div><div class="d3">21-06-04</div></div>
<div class="row" style="top:452.48px;height:15.56px"><div class="n">56</div><div class="y"></div><div class="b"></div><div class="bd"></div><div class="cl" style="left:359px"></div><div class="cl" style="left:449px"></div><div class="cl" style="left:541px"></div><div class="cl" style="left:632px"></div><div class="cl" style="left:723px"></div><div class="nm">Octroi du sous contrat de Toiture</div><div class="d1">21-06-04</div><div class="d2">21-06-04</div><div class="m">35 450,00 $</div><div class="d3">21-06-04</div></div>
<div class="row" style="top:468.04px;height:15.56px"><div class="n">58</div><div class="y"></div><div class="b"></div><div class="bd"></div><div class="cl" style="left:359px"></div><div class="cl" style="left:449px"></div><div class="cl" style="left:541px"></div><div class="cl" style="left:632px"></div><div class="cl" style="left:723px"></div><div class="nm">Octroi du sous contrat de Fournisseur de menuiserie brute</div><div class="d1">21-06-04</div><div class="d2">21-06-04</div><div class="m">19 950,00 $</div><div class="d3">21-06-04</div></div>
<div class="row" style="top:483.6px;height:15.56px"><div class="n">59</div><div class="y"></div><div class="b"></div><div class="bd"></div><div class="cl" style="left:359px"></div><div class="cl" style="left:449px"></div><div class="cl" style="left:541px"></div><div class="cl" style="left:632px"></div><div class="cl" style="left:723px"></div><div class="nm">Octroi du sous contrat de Fournisseur de pierre</div><div class="d1">21-06-04</div><div class="d2">21-06-04</div><div class="m">24 700,00 $</div><div class="d3">21-06-04</div></div>
<div class="row" style="top:499.16px;height:15.56px"><div class="n"></div><div class="y"></div><div class="abs" style="left:57px;top:0;right:0;height:100%;background:#bcd6f6"></div><svg style="left:60px;top:4px" width="6" height="6" viewBox="0 0 6 6"><path d="M5.5 .5v5h-5z" fill="#333"/></svg><div class="nm grp" style="left:69px">Sans retarder successeur: 21-06-05 00:00 - 21-06-11 23:59</div><div class="d2 grp">21-06-02</div><div class="d3 grp">21-06-02</div><div class="cl" style="left:449px;background:rgba(120,130,150,.22)"></div><div class="cl" style="left:541px;background:rgba(120,130,150,.22)"></div><div class="cl" style="left:632px;background:rgba(120,130,150,.22)"></div><div class="cl" style="left:723px;background:rgba(120,130,150,.22)"></div></div>
<div class="row" style="top:514.72px;height:29px"><div class="n">31</div><div class="y"></div><div class="b"></div><div class="bd"></div><div class="cl" style="left:359px"></div><div class="cl" style="left:449px"></div><div class="cl" style="left:541px"></div><div class="cl" style="left:632px"></div><div class="cl" style="left:723px"></div><div class="nm" style=line-height:13.2px;top:1.5px>Octroi du sous contrat de Fournisseur Portes et cadres en<br>acier</div><div class="d1">21-06-10</div><div class="d2">21-06-02</div><div class="m">2 350,00 $</div><div class="d3">21-06-02</div></div>
<div class="row" style="top:543.72px;height:15.56px"><div class="n"></div><div class="y"></div><div class="abs" style="left:57px;top:0;right:0;height:100%;background:#bcd6f6"></div><svg style="left:60px;top:4px" width="6" height="6" viewBox="0 0 6 6"><path d="M5.5 .5v5h-5z" fill="#333"/></svg><div class="nm grp" style="left:69px">Sans retarder successeur: 21-06-26 00:00 - 21-07-02 23:59</div><div class="d2 grp">21-06-04</div><div class="d3 grp">21-06-04</div><div class="cl" style="left:449px;background:rgba(120,130,150,.22)"></div><div class="cl" style="left:541px;background:rgba(120,130,150,.22)"></div><div class="cl" style="left:632px;background:rgba(120,130,150,.22)"></div><div class="cl" style="left:723px;background:rgba(120,130,150,.22)"></div></div>
<div class="abs" style="left:18px;top:559.28px;width:724px;height:5.22px;overflow:hidden"><div class="row" style="left:0;top:-1.2px"><div class="n">26</div><div class="y"></div><div class="b"></div><div class="nm">Octroi du sous contrat de Fondations et structure</div><div class="d1">21-06-28</div><div class="d2">21-06-04</div><div class="m">6 750,00 $</div><div class="d3">21-06-04</div></div></div>
<div class="abs" style="left:61.5px;top:202.32000000000002px;width:316px;height:17.5px;border:1.4px solid #2f7d32"></div>
<div class="abs" style="left:375.5px;top:217.72px;width:3px;height:3px;background:#2f7d32"></div>
<div class="abs" style="left:377px;top:218.12px;width:365px;height:1.6px;background:#8c8c8c"></div>
<div class="abs" style="left:18px;top:564px;width:1404px;height:11.6px;background:#fff"></div>
<div class="abs" style="left:0;top:575.6px;width:1422px;height:2.2px;background:#ececec"></div>
<div class="abs" style="left:0;top:577.8px;width:1422px;height:3px;background:#d8d8d8"></div>
<div class="abs" style="left:18px;top:580.8px;width:1404px;height:26.7px;background:#e6e6e6"></div>
<div class="abs" style="left:69px;top:580.5px;width:1px;height:41px;background:#d6d6d6"></div>
<div class="abs" style="left:227px;top:580.5px;width:1px;height:41px;background:#d6d6d6"></div>
<div class="abs" style="left:278px;top:580.5px;width:1px;height:41px;background:#d6d6d6"></div>
<div class="abs" style="left:329px;top:580.5px;width:1px;height:41px;background:#d6d6d6"></div>
<div class="abs" style="left:467px;top:580.5px;width:1px;height:41px;background:#d6d6d6"></div>
<div class="abs" style="left:559px;top:580.5px;width:1px;height:41px;background:#d6d6d6"></div>
<div class="abs" style="left:757px;top:580.5px;width:1px;height:41px;background:#d6d6d6"></div>
<div class="t" style="left:73px;top:594px;font-size:8.7px;color:#777">Nom de la ressource</div>
<div class="t" style="left:232px;top:594px;font-size:8.7px;color:#777">Type</div>
<div class="t" style="left:283px;top:594px;font-size:8.7px;color:#777">Initiales</div>
<div class="t" style="left:334px;top:594px;font-size:8.7px;color:#777">Groupe</div>
<div class="t" style="left:380px;top:594px;font-size:8.7px;color:#777">Nom du ST</div>
<div class="t" style="left:472px;top:594px;font-size:8.7px;color:#777">Personne ressource</div>
<div class="t" style="left:563px;top:594px;font-size:8.7px;color:#777">Adresse</div>
<div class="t" style="left:762px;top:594px;font-size:8.7px;color:#777">Téléphone</div>
<svg style="left:47px;top:588px" width="14" height="14" viewBox="0 0 14 14"><circle cx="7" cy="7" r="5.8" fill="#fff" stroke="#2b88d8" stroke-width="1"/><path d="M7 6v4" stroke="#2b88d8" stroke-width="1.3"/><circle cx="7" cy="4" r=".8" fill="#2b88d8"/></svg>
<div class="abs" style="left:18px;top:607.5px;width:22px;height:15.5px;background:#d0d0d0"></div>
<div class="t c" style="left:29px;top:610px;font-size:8.6px;font-weight:700;color:#3a8f3a">5</div>
<div class="abs" style="left:40px;top:607.5px;width:1382px;height:15.5px;background:#fff;border-bottom:1.5px solid #a8a8a8"></div>
<div class="abs" style="left:227px;top:607.5px;width:1px;height:15px;background:#dcdcdc"></div>
<div class="abs" style="left:278px;top:607.5px;width:1px;height:15px;background:#dcdcdc"></div>
<div class="abs" style="left:329px;top:607.5px;width:1px;height:15px;background:#dcdcdc"></div>
<div class="abs" style="left:467px;top:607.5px;width:1px;height:15px;background:#dcdcdc"></div>
<div class="abs" style="left:559px;top:607.5px;width:1px;height:15px;background:#dcdcdc"></div>
<div class="abs" style="left:757px;top:607.5px;width:1px;height:15px;background:#dcdcdc"></div>
<div class="t" style="left:71px;top:609.8px;font-size:10.15px;color:#1c1c1c">Acier d'armature</div>
<div class="t" style="left:229px;top:609.8px;font-size:10.15px;color:#1c1c1c">Coût</div>
<div class="t" style="left:281px;top:609.8px;font-size:10.15px;color:#1c1c1c">A</div>
<div class="t" style="left:332px;top:609.8px;font-size:10.15px;color:#1c1c1c">ES</div>
<div class="t" style="left:378px;top:609.8px;font-size:10.15px;color:#1c1c1c;width:88.5px;overflow:hidden">Armature Tremblay</div>
<div class="t" style="left:470px;top:609.8px;font-size:10.15px;color:#1c1c1c">Jean Tremblay</div>
<div class="t" style="left:561px;top:609.8px;font-size:10.15px;color:#1c1c1c">123 rue Acier, Moukmouk, A1B 2B4</div>
<div class="abs" style="left:18px;top:623.5px;width:1404px;height:131px;background:#fff"></div>
<div class="abs" style="left:0;top:754.5px;width:1422px;height:17px;background:#f3f2f1;border-top:1px solid #e1dfdd"></div>
<div class="t" style="left:6px;top:759px;font-size:8px;color:#777">Prêt</div>
<div class="t" style="left:34px;top:759px;font-size:8px;color:#333;font-weight:700">Filtre appliqué</div>
<svg style="left:114px;top:757px" width="13" height="12" viewBox="0 0 13 12"><path d="M1.5 2h8v5h-5l-1.5 2v-2h-1.5z" fill="none" stroke="#666" stroke-width=".9"/><path d="M9 8l3 3" stroke="#666" stroke-width="1"/></svg>
<div class="t" style="left:127px;top:758.8px;font-size:8.6px;color:#555">Nouvelles tâches : Planifié automatiquement</div>
</div>
<div id="olk">
<div class="tb"></div>
<svg style="left:0;top:0" width="1134" height="35" viewBox="797 140 1134 35"><g stroke="#fff" fill="none" stroke-width="1.35" stroke-linecap="round" stroke-linejoin="round"><path d="M817 148h14.2l3.3 3.3v14.2h-17.5z"/><path d="M821 148.3v5h9.3v-5"/><path d="M820.7 165.3v-6.6h10.2v6.6"/></g><g stroke="#fff" fill="none" stroke-width="1.35" stroke-linecap="round" stroke-linejoin="round" opacity=".38"><path d="M852 150.5v6.5h6.5"/><path d="M852.3 156.8c2.5-5.5 9-6.3 11.6-2.2s-.6 9-6.4 10.6"/></g><g stroke="#fff" fill="none" stroke-width="1.35" stroke-linecap="round" stroke-linejoin="round" opacity=".38"><path d="M896.5 150v5.5h-5.5"/><path d="M896.2 155.3a7.3 7.3 0 1 0 1.2 5.5"/></g><g stroke="#fff" fill="none" stroke-width="1.35" stroke-linecap="round" stroke-linejoin="round"><path d="M921.5 165V148.6M915.2 155l6.3-6.4 6.3 6.4"/><path d="M953.5 148v16.4M947.2 158l6.3 6.4 6.3-6.4"/></g><g stroke="#fff" fill="none" stroke-width="1.35" stroke-linecap="round" stroke-linejoin="round" stroke-width="1.25"><path d="M979.2 157.5a4.6 4.6 0 1 1 5.6 0"/><path d="M980 165.5l-3.2-4.2 1.8-1 1.4 1.3v-9.3a1.6 1.6 0 0 1 3.2 0v5.2l4 1.2c.8.3 1.2 1 1 2l-.8 4.8z"/></g><path d="M998.4 153.2l3 3 3-3" stroke="#fff" fill="none" stroke-width="1.35" stroke-linecap="round" stroke-linejoin="round" stroke-width="1.5"/><g stroke="#fff" fill="none" stroke-width="1.35" stroke-linecap="round" stroke-linejoin="round"><path d="M1019.7 150.3h14.6"/><path d="M1024 150v-2.4h6V150"/><path d="M1021.2 150.5v15h11.6v-15"/><path d="M1025 153.5v9.5M1029 153.5v9.5"/></g><path d="M1055.6 151.6h6.8" stroke="#fff" fill="none" stroke-width="1.35" stroke-linecap="round" stroke-linejoin="round"/><path d="M1055.4 154.8h7.2l-3.6 3.9z" fill="#fff"/><g stroke="#fff" fill="none" stroke-width="1.35" stroke-linecap="round" stroke-linejoin="round"><circle cx="1698" cy="152.8" r="4.9"/><path d="M1694.4 156.5l-6 6.3"/></g><g stroke="#fff" fill="none" stroke-width="1.35" stroke-linecap="round" stroke-linejoin="round" stroke-width="1.2"><path d="M1744 150.6h13.8v9h-13.8z"/><path d="M1744 152.5h13.8" stroke-width="1.8"/><path d="M1751 158v-3.6M1749.2 156l1.8-1.8 1.8 1.8"/></g><g stroke="#fff" fill="none" stroke-width="1.35" stroke-linecap="round" stroke-linejoin="round" stroke-width="1.2"><path d="M1797 154.6h10.6"/><path d="M1848 150h10.6v10.2h-10.6z"/><path d="M1898.600 149l11.600 11.200M1910.200 149l-11.600 11.200"/></g></svg>
<div class="t" style="left:289px;top:9.5px;font-size:12.75px;color:#fff">Bâtiment industriel Suivi DC 2021-08-27 DC2.mpp Échéancier révisé en date du 2021-08-27 08:00:...</div>
<div class="tabs"></div>
<div class="otab" style="left:12.5px;letter-spacing:-0.451px">Fichier</div>
<div class="otab" style="left:84.7px;letter-spacing:0.316px;color:#262626">Message</div>
<div class="otab" style="left:174.6px;letter-spacing:0.261px">Insertion</div>
<div class="otab" style="left:262.3px;letter-spacing:0.102px">Dessin</div>
<div class="otab" style="left:337.0px;letter-spacing:0.516px">Options</div>
<div class="otab" style="left:422.0px;letter-spacing:0.333px">Format du texte</div>
<div class="otab" style="left:559.0px;letter-spacing:0.099px">Révision</div>
<div class="otab" style="left:644.0px;letter-spacing:0.06px">Aide</div>
<div class="abs" style="left:84.5px;top:62px;width:59.5px;height:3.2px;background:#106ebe"></div>
<div class="rib"></div><div class="ribsh"></div>
<div class="abs" style="left:103.1px;top:72.4px;width:1.2px;height:97.1px;background:#cfcdcb"></div>
<div class="abs" style="left:442.1px;top:72.4px;width:1.2px;height:97.1px;background:#cfcdcb"></div>
<div class="abs" style="left:582.8px;top:72.4px;width:1.2px;height:97.1px;background:#cfcdcb"></div>
<div class="abs" style="left:745.8px;top:72.4px;width:1.2px;height:97.1px;background:#cfcdcb"></div>
<div class="abs" style="left:834.6px;top:72.4px;width:1.2px;height:97.1px;background:#cfcdcb"></div>
<div class="abs" style="left:898.6px;top:72.4px;width:1.2px;height:97.1px;background:#cfcdcb"></div>
<div class="abs" style="left:980.8px;top:72.4px;width:1.2px;height:97.1px;background:#cfcdcb"></div>
<div class="abs" style="left:1096.4px;top:72.4px;width:1.2px;height:97.1px;background:#cfcdcb"></div>
<div class="abs" style="left:195.4px;top:118px;width:1.2px;height:22.5px;background:#cfcdcb"></div>
<div class="abs" style="left:288.4px;top:118px;width:1.2px;height:22.5px;background:#cfcdcb"></div>
<div class="abs" style="left:377.2px;top:118px;width:1.2px;height:22.5px;background:#cfcdcb"></div>
<div class="abs" style="left:310.2px;top:83px;width:1.2px;height:21.2px;background:#cfcdcb"></div>
<div class="abs" style="left:403.9px;top:83px;width:1.2px;height:21.2px;background:#cfcdcb"></div>
<div class="abs" style="left:113px;top:81.4px;width:69.5px;height:24.4px;background:#fff;border:1px solid #c6c6c6"></div>
<div class="abs" style="left:185.5px;top:81.4px;width:66.5px;height:24.4px;background:#fff;border:1px solid #c6c6c6"></div>
<div class="abs" style="left:294.4000000000001px;top:116px;width:24.8px;height:26px;background:#c8c6c4;border:1px solid #a9a7a5;border-radius:1.5px"></div>
<div class="ol" style="left:37.01px;transform:translateX(-50%);top:114.95px;font-size:12.7px;letter-spacing:0.026px;color:#444">Coller</div>
<div class="ol" style="left:1px;top:159.06px;font-size:12.1px;letter-spacing:-0.083px;color:#444">Presse-papiers</div>
<div class="ol" style="left:116.6px;top:87.36px;font-size:13.4px;letter-spacing:-0.129px;color:#333">Calibri</div>
<div class="ol" style="left:189px;top:87.36px;font-size:13.4px;letter-spacing:0px;color:#333">11</div>
<div class="ol" style="left:120px;top:120.24px;font-size:14.6px;letter-spacing:0px;color:#333;font-weight:700">G</div>
<div class="ol" style="left:148.2px;top:119.48px;font-size:15.5px;letter-spacing:0px;color:#444;font-family:'Liberation Serif',serif;font-style:italic">I</div>
<div class="ol" style="left:174.3px;top:120.58px;font-size:14.2px;letter-spacing:0px;color:#444;text-decoration:underline">S</div>
<div class="ol" style="left:259px;top:82.19px;font-size:19.5px;letter-spacing:0px;color:#444">A</div>
<div class="ol" style="left:287.5px;top:85.58px;font-size:15.5px;letter-spacing:0px;color:#444">A</div>
<div class="ol" style="left:413.5px;top:82.19px;font-size:19.5px;letter-spacing:0px;color:#444">A</div>
<div class="ol" style="left:250.3px;top:117.8px;font-size:16.3px;letter-spacing:0px;color:#444">A</div>
<div class="ol" style="left:231px;top:159.06px;font-size:12.1px;letter-spacing:0.068px;color:#444">Texte simple</div>
<div class="ol" style="left:484.91px;transform:translateX(-50%);top:114.95px;font-size:12.7px;letter-spacing:-0.184px;color:#444">Carnet</div>
<div class="ol" style="left:484.29px;transform:translateX(-50%);top:132.65px;font-size:12.7px;letter-spacing:-0.224px;color:#444">d'adresses</div>
<div class="ol" style="left:546.59px;transform:translateX(-50%);top:114.95px;font-size:12.7px;letter-spacing:-0.218px;color:#444">Vérifier</div>
<div class="ol" style="left:546.18px;transform:translateX(-50%);top:132.65px;font-size:12.7px;letter-spacing:-0.031px;color:#444">les noms</div>
<div class="ol" style="left:513.27px;transform:translateX(-50%);top:159.06px;font-size:12.1px;letter-spacing:-0.266px;color:#444">Noms</div>
<div class="ol" style="left:617px;top:77.65px;font-size:12.7px;letter-spacing:0.229px;color:#444">Joindre un fichier</div>
<div class="ol" style="left:618px;top:102.95px;font-size:12.7px;letter-spacing:-0.204px;color:#444">Lien</div>
<div class="ol" style="left:618px;top:128.75px;font-size:12.7px;letter-spacing:0.102px;color:#444">Une signature</div>
<div class="ol" style="left:646.9px;top:159.06px;font-size:12.1px;letter-spacing:0.197px;color:#444">Inclure</div>
<div class="ol" style="left:750.4px;top:159.06px;font-size:12.1px;letter-spacing:0.331px;color:#444">Indicateurs</div>
<div class="ol" style="left:867.71px;transform:translateX(-50%);top:114.95px;font-size:12.7px;letter-spacing:0.027px;color:#444">Dicter</div>
<div class="ol" style="left:867.5px;transform:translateX(-50%);top:159.06px;font-size:12.1px;letter-spacing:0.01px;color:#444">Voix</div>
<div class="ol" style="left:940.7px;transform:translateX(-50%);top:114.95px;font-size:12.7px;letter-spacing:0.001px;color:#444">Rédacteur</div>
<div class="ol" style="left:941.07px;transform:translateX(-50%);top:159.06px;font-size:12.1px;letter-spacing:0.147px;color:#444">Rédacteur</div>
<div class="ol" style="left:1039.38px;transform:translateX(-50%);top:114.95px;font-size:12.7px;letter-spacing:0.367px;color:#444">Outils</div>
<div class="ol" style="left:1039.79px;transform:translateX(-50%);top:132.65px;font-size:12.7px;letter-spacing:0.173px;color:#444">d'apprentissage</div>
<div class="ol" style="left:1039.53px;transform:translateX(-50%);top:159.06px;font-size:12.1px;letter-spacing:0.265px;color:#444">Immersion</div>
<svg style="left:0;top:67px" width="1134" height="110" viewBox="797 207 1134 110"><path d="M823 221.8h22v25.2h-22z" fill="#fdfdfd" stroke="#f0983a" stroke-width="2"/><path d="M828.6 222.6v-2.6h3.2c.4-2.6 2-3.6 3.6-3.6s3.2 1 3.6 3.6h3.2v2.6z" fill="#f3f2f1" stroke="#666" stroke-width="1.2" stroke-linejoin="round"/><path d="M838 231h13.4v17H838z" fill="#fdfdfd" stroke="#555" stroke-width="1.5"/><path d="M830.6999999999999 277.0l3.2 3.2 3.2-3.2" stroke="#505050" fill="none" stroke-width="1.5" stroke-linecap="round" stroke-linejoin="round"/><g stroke="#8a8a8a" fill="none" stroke-width="1.2" stroke-linecap="round"><path d="M866.2 216.5l7.4 11.5M874.8 216.5l-7.4 11.5"/><circle cx="867.3" cy="230.2" r="2"/><circle cx="873.7" cy="230.2" r="2"/></g><g stroke="#9a9a9a" fill="#f6f6f6" stroke-width="1.1" stroke-linejoin="round"><path d="M862 243h7.5v13.5H862z"/><path d="M868.5 246h6.5l4 4v9.3h-10.5z"/><path d="M871 252.5h5.5M871 255.5h5.5" stroke-width=".9"/></g><g stroke-linejoin="round"><path d="M873.5 270.5l4.2-1.6 1.2 3-4 2.2z" fill="#8c8c8c" stroke="#777" stroke-width=".8"/><path d="M866 274.8l8-3.4 3.6 5.6-7 4.6z" fill="#fff" stroke="#f0983a" stroke-width="1.4"/><path d="M863.2 277.2l6.5 7.4 8-5.4-1.4-2.4-7 4.4-3.6-5.4z" fill="#f0983a" stroke="#f0983a" stroke-width="1"/></g><g stroke="#606060" fill="none" stroke-width="1"><path d="M888 307V301h6"/><path d="M891.2 304.2l5 5M896.4 305.6v3.8h-3.8"/></g><path d="M969.3000000000001 231.95l3.3 3.3 3.3-3.3" stroke="#444" fill="none" stroke-width="1.6" stroke-linecap="round" stroke-linejoin="round"/><path d="M1039.0 231.95l3.3 3.3 3.3-3.3" stroke="#444" fill="none" stroke-width="1.6" stroke-linecap="round" stroke-linejoin="round"/><path d="M1068.8 227.6l2.2-2.2 2.2 2.2" stroke="#3a96dd" fill="none" stroke-width="1.3"/><path d="M1095.3 225.6l2.2 2.2 2.2-2.2" stroke="#3a96dd" fill="none" stroke-width="1.3"/><circle cx="1118" cy="226" r="1.6" fill="#2b7cd3"/><path d="M1122.3 226h10.8" stroke="#666" stroke-width="1.5"/><path d="M1165.5 226h10.5" stroke="#666" stroke-width="1.5"/><circle cx="1118" cy="232.8" r="1.6" fill="#2b7cd3"/><path d="M1122.3 232.8h10.8" stroke="#666" stroke-width="1.5"/><path d="M1165.5 232.8h10.5" stroke="#666" stroke-width="1.5"/><circle cx="1118" cy="239.5" r="1.6" fill="#2b7cd3"/><path d="M1122.3 239.5h10.8" stroke="#666" stroke-width="1.5"/><path d="M1165.5 239.5h10.5" stroke="#666" stroke-width="1.5"/><g fill="#2b7cd3" font-family="Liberation Sans,sans-serif" font-size="6.2" font-weight="700"><text x="1159" y="228.2">1</text><text x="1159" y="235">2</text><text x="1159" y="241.8">3</text></g><path d="M1141.3 231.6l3.2 3.2 3.2-3.2" stroke="#505050" fill="none" stroke-width="1.5" stroke-linecap="round" stroke-linejoin="round"/><path d="M1184.5 231.6l3.2 3.2 3.2-3.2" stroke="#505050" fill="none" stroke-width="1.5" stroke-linecap="round" stroke-linejoin="round"/><path d="M1218.2 238.2l5.8-7 4.3 3.4-5.8 7z" fill="#c77fd6" stroke="#a04db8" stroke-width=".9" stroke-linejoin="round"/><path d="M1222.4 236l2 1.6" stroke="#fff" stroke-width="1.2"/><path d="M1004.5 270.8l2.2-3.8 8.2-7.6 3 3-8.2 7.6z" fill="#f3f2f1" stroke="#555" stroke-width="1.2" stroke-linejoin="round"/><path d="M1004.2 271.2l3-.6" stroke="#555" stroke-width="1.2"/><rect x="1001.2" y="272.6" width="17.8" height="5.2" fill="#ffeb00"/><path d="M1026.2 266.7l3.2 3.2 3.2-3.2" stroke="#505050" fill="none" stroke-width="1.5" stroke-linecap="round" stroke-linejoin="round"/><rect x="1044.3" y="273" width="17.4" height="5" fill="#e81123"/><path d="M1069.3999999999999 266.7l3.2 3.2 3.2-3.2" stroke="#505050" fill="none" stroke-width="1.5" stroke-linecap="round" stroke-linejoin="round"/><path d="M1095.9 261H1111.8" stroke="#555" stroke-width="1.4"/><path d="M1123.2 261H1138" stroke="#666" stroke-width="1.4"/><path d="M1149.5 261H1164.8" stroke="#666" stroke-width="1.4"/><path d="M1095.9 265.5H1107.3" stroke="#555" stroke-width="1.4"/><path d="M1125.6 265.5H1135.7" stroke="#666" stroke-width="1.4"/><path d="M1154 265.5H1164.8" stroke="#666" stroke-width="1.4"/><path d="M1095.9 270H1111.8" stroke="#555" stroke-width="1.4"/><path d="M1123.2 270H1138" stroke="#666" stroke-width="1.4"/><path d="M1149.5 270H1164.8" stroke="#666" stroke-width="1.4"/><path d="M1095.9 274.4H1107.3" stroke="#555" stroke-width="1.4"/><path d="M1125.6 274.4H1135.7" stroke="#666" stroke-width="1.4"/><path d="M1154 274.4H1164.8" stroke="#666" stroke-width="1.4"/><path d="M1183.7 261h16M1183.7 274.4h16M1192.7 265.5h7M1192.7 270h7" stroke="#666" stroke-width="1.4"/><path d="M1210 261h16M1210 274.4h16M1219 265.5h7M1219 270h7" stroke="#666" stroke-width="1.4"/><path d="M1190 267.7h-5.5M1186.8 265.2l-2.5 2.5 2.5 2.5" stroke="#2b7cd3" fill="none" stroke-width="1.4"/><path d="M1210.3 267.7h5.5M1213.5 265.2l2.5 2.5-2.5 2.5" stroke="#2b7cd3" fill="none" stroke-width="1.4"/><g stroke="#606060" fill="none" stroke-width="1"><path d="M1227.5 307V301h6"/><path d="M1230.7 304.2l5 5M1235.9 305.6v3.8h-3.8"/></g><g stroke="#505050" fill="none" stroke-width="1.3" stroke-linecap="round" stroke-linejoin="round" stroke-width="1.5"><path d="M1269.6 217.2h22.2v29.6h-22.2z"/><path d="M1269.6 243h22.2"/><circle cx="1280.7" cy="226.8" r="4.6"/><path d="M1273.2 238.6c.6-4.6 3.6-6.4 7.5-6.4s6.900 1.800 7.500 6.400"/></g><g stroke="#505050" fill="none" stroke-width="1.3" stroke-linecap="round" stroke-linejoin="round" stroke-width="1.5"><circle cx="1350.200" cy="223.200" r="5.600"/><path d="M1345.600 230.600c2-1.600 7.200-1.600 9.200 0 2 1.400 3.200 3.200 3.600 5"/></g><g stroke="#3b8ed8" fill="none" stroke-width="1.5" stroke-linecap="round"><circle cx="1336.800" cy="233.600" r="5.400"/><path d="M1328.600 247c.4-5 3.400-7.400 8.200-7.400 2 0 3.600.4 4.800 1.200"/></g><path d="M1342.600 242.600l5.400 5.600 11.800-11.800" stroke="#4fa860" fill="none" stroke-width="1.600"/><path d="M1399.400 224v-5.400a2.800 2.800 0 0 1 5.600 0v9.400a4 4 0 0 1-8 0v-8.400" stroke="#505050" fill="none" stroke-width="1.3" stroke-linecap="round" stroke-linejoin="round" stroke-width="1.350"/><path d="M1402.200 219.500v8" stroke="#505050" fill="none" stroke-width="1.3" stroke-linecap="round" stroke-linejoin="round" stroke-width="1.100"/><path d="M1519.6999999999998 221.95000000000002l2.9 2.9 2.9-2.9" stroke="#505050" fill="none" stroke-width="1.4" stroke-linecap="round" stroke-linejoin="round"/><g stroke="#505050" fill="none" stroke-width="1.3" stroke-linecap="round" stroke-linejoin="round" stroke-width="1.400"><path d="M1401.500 246.200h-4.200a3.200 3.200 0 0 0 0 6.400h1.600"/><path d="M1399.200 249.400h6.400"/><path d="M1402.800 252.600h4.400a3.200 3.200 0 0 0 0-6.400h-1.600"/><path d="M1396 245.200c-3-.2-3 2.600-1.200 3.600"/></g><path d="M1450.8999999999999 247.55l2.9 2.9 2.9-2.9" stroke="#505050" fill="none" stroke-width="1.4" stroke-linecap="round" stroke-linejoin="round"/><path d="M1396 265.200h7.800l4 4v12.600h-11.800z" fill="#fbfbfb" stroke="#555" stroke-width="1.200" stroke-linejoin="round"/><path d="M1403.500 265.400v4.200h4" stroke="#505050" fill="none" stroke-width="1.3" stroke-linecap="round" stroke-linejoin="round" stroke-width="1"/><path d="M1399.600 279.600l1.200-4 8.400-8.400 2.600 2.600-8.400 8.400z" fill="#3b8ed8" stroke="#2b7cd3" stroke-width=".8" stroke-linejoin="round"/><path d="M1397.800 281.400h8" stroke="#2b7cd3" stroke-width="1.300"/><path d="M1499.8 272.95l2.9 2.9 2.9-2.9" stroke="#505050" fill="none" stroke-width="1.4" stroke-linecap="round" stroke-linejoin="round"/><path d="M1574.200 216v16.600" stroke="#555" stroke-width="1.400"/><path d="M1574.800 215.800h6v1.600h5.800v8.400h-6v-1.600h-5.800z" fill="#f8b4b4" stroke="#e03a3e" stroke-width="1.300" stroke-linejoin="round"/><path d="M1595.1 222.85000000000002l2.9 2.9 2.9-2.9" stroke="#505050" fill="none" stroke-width="1.4" stroke-linecap="round" stroke-linejoin="round"/><path d="M1580.600 242.400v12" stroke="#e03a3e" stroke-width="1.700"/><circle cx="1580.600" cy="258.400" r="1.100" fill="#e03a3e"/><path d="M1580.600 268.600v17.400M1573.800 279.600l6.800 6.800 6.800-6.800" stroke="#2f96d8" fill="none" stroke-width="1.500"/><g stroke="#606060" fill="none" stroke-width="1"><path d="M1619.3 307V301h6"/><path d="M1622.5 304.2l5 5M1627.7 305.6v3.8h-3.8"/></g><rect x="1658.200" y="215.200" width="13" height="23.400" rx="6.500" fill="#74b5ea" stroke="#3b8ed8" stroke-width="1.300"/><path d="M1654.400 232.600a10.300 10.300 0 0 0 20.600 0M1664.700 243.200v5" stroke="#505050" fill="none" stroke-width="1.3" stroke-linecap="round" stroke-linejoin="round" stroke-width="1.500"/><g stroke="#185abd" stroke-width="4.300" stroke-linecap="round"><path d="M1741 226h11.600M1736.400 234.400h10.800M1731.400 242.600h10.400"/></g><path d="M1722 247.600l2.400-8 16.400-23 5 3.600-16.400 23z" fill="#fff" stroke="#185abd" stroke-width="1.700" stroke-linejoin="round"/><path d="M1737.800 217.800l4.200-2.800 4.600 3.200-1 2" fill="#185abd" stroke="#185abd" stroke-width="1.500" stroke-linejoin="round"/><path d="M1722 247.600l1.200-4 2.600 1.800z" fill="#185abd"/><path d="M1820.200 218.200h15.800v25.200c-3-1.600-6-1.600-9-1.600h-6.800z M1836 218.200h15.800v13" fill="#fafafa" stroke="#555" stroke-width="1.500" stroke-linejoin="round"/><path d="M1836 218.200v16" stroke="#555" stroke-width="1.500"/><path d="M1837.600 241.200l7.400-7v14.200z" fill="#eaf3fb" stroke="#3b8ed8" stroke-width="1.300" stroke-linejoin="round"/><path d="M1848 237.200c1.800 2.400 1.800 5.800 0 8.200M1851 234.600c3 4 3 9.400 0 13.400" stroke="#3b8ed8" fill="none" stroke-width="1.300" stroke-linecap="round"/><path d="M1909.600 309l5.400-5.200 5.400 5.200" stroke="#444" fill="none" stroke-width="1.500"/></svg>
<div class="btn" style="left:15px;top:192px;width:66px;height:83px"></div>
<svg style="left:34px;top:209px" width="26" height="22" viewBox="0 0 26 22"><path d="M2.5 2L23 10.5 2.5 19 5.5 10.5z M5.5 10.5H23" fill="none" stroke="#444" stroke-width="1.3" stroke-linejoin="round"/></svg>
<div class="ol olc" style="left:48px;top:245px;font-size:12.8px;color:#333">Envoyer</div>
<div class="btn" style="left:99px;top:192px;width:89px;height:35px"></div>
<div class="ol" style="left:124px;top:203px;color:#333;font-size:12.8px">De</div>
<svg style="left:147px;top:206px" width="11" height="7" viewBox="0 0 11 7"><path d="M1 1l4.5 4.5L10 1" fill="none" stroke="#444" stroke-width="1.3"/></svg>
<div class="btn" style="left:99px;top:236px;width:89px;height:35px"></div>
<div class="ol olc" style="left:143px;top:247px;color:#333;font-size:12.8px">À</div>
<div class="btn" style="left:99px;top:281px;width:89px;height:35px"></div>
<div class="ol olc" style="left:143px;top:292px;color:#333;font-size:12.8px">Cc</div>
<div class="ol" style="left:127px;top:336px;color:#7a7a7a;font-size:12.8px">Objet</div>
<div class="ol" style="left:201px;top:203.5px;color:#555;font-size:12.9px;letter-spacing:0.217px">info@jparadis.com</div>
<div class="hl" style="left:201px;top:232px;width:914px"></div>
<svg style="left:201px;top:248px" width="12" height="12" viewBox="0 0 12 12"><circle cx="6" cy="6" r="5.5" fill="#6bb700"/><path d="M3.2 6.2l2 2 3.6-4" fill="none" stroke="#fff" stroke-width="1.5"/></svg>
<div class="ol" style="left:217px;top:249px;color:#333;font-size:12.9px;letter-spacing:0.202px;text-decoration:underline">'idebost@jparadis.com'</div>
<div class="hl" style="left:201px;top:276px;width:914px;background:#a6a6a6"></div>
<div class="hl" style="left:201px;top:320px;width:914px"></div>
<div class="ol" style="left:201px;top:336.5px;color:#444;font-size:12.3px;letter-spacing:0.216px">Bâtiment industriel Suivi DC 2021-08-27 DC2.mpp Échéancier révisé en date du 2021-08-27 08:00:00</div>
<div class="hl" style="left:0;top:365px;width:1133px;background:#e4e4e4"></div>
<div class="btn" style="left:15px;top:375px;width:222px;height:46px;border-color:#bdbdbd"></div>
<svg style="left:25px;top:380.500px" width="29" height="34" viewBox="0 0 29 34"><path d="M3.400 1.300h13.400l9.600 7v22.200a2.400 2.400 0 0 1-2.400 2.400h-20.600a2.400 2.400 0 0 1-2.400-2.400v-26.800a2.400 2.400 0 0 1 2.400-2.400z" fill="#fdf6f6" stroke="#e8473f" stroke-width="1.700" stroke-linejoin="round"/><path d="M13.200 9.400c-1.700-.9-1.600-3.300 0-3.300s1.700 2.400 0 3.300c-.3 3.800-2.600 8.300-6.300 10.400-2 1.100-2.100-1.600-.2-2.400 4.300-1.900 8.800-2.900 13.400-2.700 2.200.1 2.200 2.200 0 2-3.600-.4-6.200-3.500-6.900-7.300z" fill="none" stroke="#e8382d" stroke-width="1.350" stroke-linejoin="round"/><text x="7.700" y="28.400" font-family="Liberation Sans,sans-serif" font-weight="700" font-size="6.800" fill="#1a1a1a" textLength="12" lengthAdjust="spacingAndGlyphs">PDF</text></svg>
<div class="ol" style="left:67px;top:384px;color:#333;font-size:12.8px;letter-spacing:0.123px">Acier d'armature.PDF</div>
<div class="ol" style="left:67px;top:401.5px;color:#555;font-size:12.3px;letter-spacing:-.2px">77 KB</div>
<svg style="left:216.5px;top:395.5px" width="11" height="8" viewBox="0 0 11 8"><path d="M1 1.200l4.500 4.500 4.500-4.500" fill="none" stroke="#444" stroke-width="1.800"/></svg>
<div class="hl" style="left:0;top:431px;width:1133px;background:#e4e4e4"></div>
<div class="abs" style="left:7.5px;top:452px;width:1.3px;height:20px;background:#000"></div>
<div class="t" style="left:8px;top:455.5px;font-family:'DejaVu Sans',sans-serif;font-size:13.27px;letter-spacing:-0.004px;color:#222">Vous trouverez ci-joint l'échéancier courant pour le projet cité en rubrique.Afin d'assurer un déroulement du projet harmonieux, veuillez vous conformer à cet</div>
<div class="t" style="left:8px;top:476.3px;font-family:'DejaVu Sans',sans-serif;font-size:13.27px;letter-spacing:-0.15px;color:#222">échéancier. Si vous étiez en désaccord avec cet échéancier veuillez communiquez avec nous dans les 24 heures.</div>
<svg style="left:7.5px;top:491.79999999999995px;overflow:hidden" width="393.5" height="230.7" viewBox="804.5 632.5 393.5 230" preserveAspectRatio="none"><defs><linearGradient id="sky" x1="0" y1="0" x2="0" y2="1"><stop offset="0" stop-color="#5f93d2"/><stop offset="1" stop-color="#9cbfe6"/></linearGradient><linearGradient id="bld" x1="0" y1="0" x2="1" y2="0"><stop offset="0" stop-color="#2f64ac"/><stop offset=".42" stop-color="#27579a"/><stop offset=".5" stop-color="#173a72"/><stop offset="1" stop-color="#234f90"/></linearGradient><linearGradient id="wood" x1="0" y1="0" x2="1" y2="1"><stop offset="0" stop-color="#9a4a22"/><stop offset="1" stop-color="#6e2a10"/></linearGradient><linearGradient id="shd" x1="0" y1="0" x2="0" y2="1"><stop offset="0" stop-color="#d8d8d8"/><stop offset=".35" stop-color="#2a2a2a"/><stop offset=".6" stop-color="#555"/><stop offset="1" stop-color="#e6e6e6"/></linearGradient></defs><rect x="804.5" y="632.5" width="393.5" height="230" fill="#5b9bd5"/><rect x="804.5" y="632.5" width="155.5" height="230" fill="url(#sky)"/><rect x="855" y="791" width="65" height="71.500" fill="#e4e6ea"/><rect x="872" y="793" width="48" height="26" fill="url(#shd)"/><rect x="920" y="791" width="40" height="36" fill="#a9c0dc"/><path d="M919 826h41v36.500h-48z" fill="url(#wood)"/><path d="M858 824.0l52 2" stroke="#9aa3b0" stroke-width=".7" opacity=".8"/><path d="M858 828.5l52 -2" stroke="#9aa3b0" stroke-width=".7" opacity=".8"/><path d="M858 833.0l52 2" stroke="#9aa3b0" stroke-width=".7" opacity=".8"/><path d="M858 837.5l52 -2" stroke="#9aa3b0" stroke-width=".7" opacity=".8"/><path d="M858 842.0l52 2" stroke="#9aa3b0" stroke-width=".7" opacity=".8"/><path d="M858 846.5l52 -2" stroke="#9aa3b0" stroke-width=".7" opacity=".8"/><path d="M858 851.0l52 2" stroke="#9aa3b0" stroke-width=".7" opacity=".8"/><path d="M858 855.5l52 -2" stroke="#9aa3b0" stroke-width=".7" opacity=".8"/><path d="M858 860.0l52 2" stroke="#9aa3b0" stroke-width=".7" opacity=".8"/><path d="M884 862l12-22 8 14 6-18" stroke="#b9a86a" stroke-width="2.200" fill="none" opacity=".8"/><path d="M846 656l14-23.500M851 632.500l6 12M860 640l14-7.500" stroke="#9a9a3a" stroke-width="1.800" fill="none"/><path d="M804.5 632.500h4l24 5 22 14 2 140 24 12v59h-76z" fill="url(#bld)"/><path d="M804.5 632.500h4l24 5v225h-28z" fill="#4a82c6" opacity=".35"/><path d="M804.5 640L832 642L856 646" stroke="#8fb8e8" stroke-width=".8" fill="none" opacity=".4"/><path d="M804.5 646L832 648L856 652" stroke="#8fb8e8" stroke-width=".8" fill="none" opacity=".4"/><path d="M804.5 652L832 654L856 658" stroke="#8fb8e8" stroke-width=".8" fill="none" opacity=".4"/><path d="M804.5 658L832 660L856 664" stroke="#8fb8e8" stroke-width=".8" fill="none" opacity=".4"/><path d="M804.5 664L832 666L856 670" stroke="#8fb8e8" stroke-width=".8" fill="none" opacity=".4"/><path d="M804.5 670L832 672L856 676" stroke="#8fb8e8" stroke-width=".8" fill="none" opacity=".4"/><path d="M804.5 676L832 678L856 682" stroke="#8fb8e8" stroke-width=".8" fill="none" opacity=".4"/><path d="M804.5 682L832 684L856 688" stroke="#8fb8e8" stroke-width=".8" fill="none" opacity=".4"/><path d="M804.5 688L832 690L856 694" stroke="#8fb8e8" stroke-width=".8" fill="none" opacity=".4"/><path d="M804.5 694L832 696L856 700" stroke="#8fb8e8" stroke-width=".8" fill="none" opacity=".4"/><path d="M804.5 700L832 702L856 706" stroke="#8fb8e8" stroke-width=".8" fill="none" opacity=".4"/><path d="M804.5 706L832 708L856 712" stroke="#8fb8e8" stroke-width=".8" fill="none" opacity=".4"/><path d="M804.5 712L832 714L856 718" stroke="#8fb8e8" stroke-width=".8" fill="none" opacity=".4"/><path d="M804.5 718L832 720L856 724" stroke="#8fb8e8" stroke-width=".8" fill="none" opacity=".4"/><path d="M804.5 724L832 726L856 730" stroke="#8fb8e8" stroke-width=".8" fill="none" opacity=".4"/><path d="M804.5 730L832 732L856 736" stroke="#8fb8e8" stroke-width=".8" fill="none" opacity=".4"/><path d="M804.5 736L832 738L856 742" stroke="#8fb8e8" stroke-width=".8" fill="none" opacity=".4"/><path d="M804.5 742L832 744L856 748" stroke="#8fb8e8" stroke-width=".8" fill="none" opacity=".4"/><path d="M804.5 748L832 750L856 754" stroke="#8fb8e8" stroke-width=".8" fill="none" opacity=".4"/><path d="M804.5 754L832 756L856 760" stroke="#8fb8e8" stroke-width=".8" fill="none" opacity=".4"/><path d="M804.5 760L832 762L856 766" stroke="#8fb8e8" stroke-width=".8" fill="none" opacity=".4"/><path d="M804.5 766L832 768L856 772" stroke="#8fb8e8" stroke-width=".8" fill="none" opacity=".4"/><path d="M804.5 772L832 774L856 778" stroke="#8fb8e8" stroke-width=".8" fill="none" opacity=".4"/><path d="M804.5 778L832 780L856 784" stroke="#8fb8e8" stroke-width=".8" fill="none" opacity=".4"/><path d="M804.5 784L832 786L856 790" stroke="#8fb8e8" stroke-width=".8" fill="none" opacity=".4"/><path d="M804.5 790L832 792L880 798" stroke="#8fb8e8" stroke-width=".8" fill="none" opacity=".4"/><path d="M804.5 796L832 798L880 804" stroke="#8fb8e8" stroke-width=".8" fill="none" opacity=".4"/><path d="M804.5 802L832 804L880 810" stroke="#8fb8e8" stroke-width=".8" fill="none" opacity=".4"/><path d="M804.5 808L832 810L880 816" stroke="#8fb8e8" stroke-width=".8" fill="none" opacity=".4"/><path d="M804.5 814L832 816L880 822" stroke="#8fb8e8" stroke-width=".8" fill="none" opacity=".4"/><path d="M804.5 820L832 822L880 828" stroke="#8fb8e8" stroke-width=".8" fill="none" opacity=".4"/><path d="M804.5 826L832 828L880 834" stroke="#8fb8e8" stroke-width=".8" fill="none" opacity=".4"/><path d="M804.5 832L832 834L880 840" stroke="#8fb8e8" stroke-width=".8" fill="none" opacity=".4"/><path d="M804.5 838L832 840L880 846" stroke="#8fb8e8" stroke-width=".8" fill="none" opacity=".4"/><path d="M804.5 844L832 846L880 852" stroke="#8fb8e8" stroke-width=".8" fill="none" opacity=".4"/><path d="M804.5 850L832 852L880 858" stroke="#8fb8e8" stroke-width=".8" fill="none" opacity=".4"/><path d="M804.5 856L832 858L880 864" stroke="#8fb8e8" stroke-width=".8" fill="none" opacity=".4"/><path d="M804.5 862L832 864L880 870" stroke="#8fb8e8" stroke-width=".8" fill="none" opacity=".4"/><path d="M811 634V862" stroke="#9cc2ee" stroke-width=".7" opacity=".3"/><path d="M818 634V862" stroke="#9cc2ee" stroke-width=".7" opacity=".3"/><path d="M825 634V862" stroke="#9cc2ee" stroke-width=".7" opacity=".3"/><path d="M832 634V862" stroke="#9cc2ee" stroke-width=".7" opacity=".3"/><path d="M838 634V862" stroke="#9cc2ee" stroke-width=".7" opacity=".3"/><path d="M844 634V862" stroke="#9cc2ee" stroke-width=".7" opacity=".3"/><path d="M850 634V862" stroke="#9cc2ee" stroke-width=".7" opacity=".3"/><path d="M816 802l46 8v46l-46-6z" fill="#101f45" opacity=".82"/><path d="M806 790l10 3v60l-10-2z" fill="#5f95d4" opacity=".6"/><path d="M832 640l24 14v138l-24-4z" fill="#0f2a5c" opacity=".45"/><path d="M804.500 846l34 9v7.500h-34z" fill="#dfe3ea"/><path d="M806 852l30 7M806 857l24 5" stroke="#9aa3b0" stroke-width=".7"/><path d="M860 800l20 10v50l-20-4z" fill="#4d86cc" opacity=".8"/><rect x="855" y="632.500" width="105" height="14" fill="#78a6da"/><rect x="855" y="646" width="105" height="145" fill="#bad5ef" opacity=".93"/><rect x="855" y="738" width="26" height="53" fill="#7fabdc" opacity=".75"/><path d="M857 650H960" stroke="#a3c3e6" stroke-width=".6"/><path d="M857 655H960" stroke="#a3c3e6" stroke-width=".6"/><path d="M857 660H960" stroke="#a3c3e6" stroke-width=".6"/><path d="M857 665H960" stroke="#a3c3e6" stroke-width=".6"/><path d="M857 670H960" stroke="#a3c3e6" stroke-width=".6"/><path d="M857 675H960" stroke="#a3c3e6" stroke-width=".6"/><path d="M857 680H960" stroke="#a3c3e6" stroke-width=".6"/><path d="M857 685H960" stroke="#a3c3e6" stroke-width=".6"/><path d="M857 690H960" stroke="#a3c3e6" stroke-width=".6"/><path d="M857 695H960" stroke="#a3c3e6" stroke-width=".6"/><path d="M857 700H960" stroke="#a3c3e6" stroke-width=".6"/><path d="M857 705H960" stroke="#a3c3e6" stroke-width=".6"/><path d="M857 710H960" stroke="#a3c3e6" stroke-width=".6"/><path d="M857 715H960" stroke="#a3c3e6" stroke-width=".6"/><path d="M857 720H960" stroke="#a3c3e6" stroke-width=".6"/><path d="M857 725H960" stroke="#a3c3e6" stroke-width=".6"/><path d="M857 730H960" stroke="#a3c3e6" stroke-width=".6"/><path d="M857 735H960" stroke="#a3c3e6" stroke-width=".6"/><path d="M857 740H960" stroke="#a3c3e6" stroke-width=".6"/><path d="M857 745H960" stroke="#a3c3e6" stroke-width=".6"/><path d="M857 750H960" stroke="#a3c3e6" stroke-width=".6"/><path d="M857 755H960" stroke="#a3c3e6" stroke-width=".6"/><path d="M857 760H960" stroke="#a3c3e6" stroke-width=".6"/><path d="M857 765H960" stroke="#a3c3e6" stroke-width=".6"/><path d="M857 770H960" stroke="#a3c3e6" stroke-width=".6"/><path d="M857 775H960" stroke="#a3c3e6" stroke-width=".6"/><path d="M857 780H960" stroke="#a3c3e6" stroke-width=".6"/><path d="M857 785H960" stroke="#a3c3e6" stroke-width=".6"/><path d="M884 648V790" stroke="#a3c3e6" stroke-width=".6"/><path d="M897 648V790" stroke="#a3c3e6" stroke-width=".6"/><path d="M905 648V790" stroke="#a3c3e6" stroke-width=".6"/><path d="M918 648V790" stroke="#a3c3e6" stroke-width=".6"/><path d="M931 648V790" stroke="#a3c3e6" stroke-width=".6"/><path d="M944 648V790" stroke="#a3c3e6" stroke-width=".6"/><path d="M862.9714982944995 652.0h9.810190087094023" stroke="#9bbbe0" stroke-width="1.600"/><path d="M863.9528034191195 657.5h8.869235440010513" stroke="#9bbbe0" stroke-width="1.600"/><path d="M863.6076460129201 663.0h12.388267002951027" stroke="#9bbbe0" stroke-width="1.600"/><path d="M862.1739967743241 668.5h14.089228798273043" stroke="#9bbbe0" stroke-width="1.600"/><path d="M862.112486975326 674.0h13.203748203948631" stroke="#9bbbe0" stroke-width="1.600"/><path d="M862.2095662707238 679.5h9.08855616012638" stroke="#9bbbe0" stroke-width="1.600"/><path d="M863.2735575674276 685.0h17.922225496064456" stroke="#9bbbe0" stroke-width="1.600"/><path d="M862.3714058834489 690.5h10.678867575284174" stroke="#9bbbe0" stroke-width="1.600"/><path d="M863.8822996672168 696.0h19.372507309484067" stroke="#9bbbe0" stroke-width="1.600"/><path d="M863.7313088458525 701.5h12.760165695809363" stroke="#9bbbe0" stroke-width="1.600"/><path d="M864.9287653167787 707.0h8.558992167413075" stroke="#9bbbe0" stroke-width="1.600"/><path d="M864.575405377146 712.5h11.475311435980116" stroke="#9bbbe0" stroke-width="1.600"/><path d="M862.4327652500723 718.0h9.41350685694042" stroke="#9bbbe0" stroke-width="1.600"/><path d="M862.9254454723058 723.5h17.793516309440378" stroke="#9bbbe0" stroke-width="1.600"/><path d="M862.5421791397719 729.0h14.979201963949595" stroke="#9bbbe0" stroke-width="1.600"/><path d="M863.9167404067786 734.5h12.468770512708774" stroke="#9bbbe0" stroke-width="1.600"/><path d="M863.6432333971287 740.0h8.753467699679877" stroke="#9bbbe0" stroke-width="1.600"/><path d="M862.1788035098987 745.5h10.471504553831918" stroke="#9bbbe0" stroke-width="1.600"/><path d="M864.0411999195453 751.0h13.131107668032834" stroke="#9bbbe0" stroke-width="1.600"/><path d="M862.9424415111304 756.5h15.026742362091664" stroke="#9bbbe0" stroke-width="1.600"/><path d="M863.3595531291123 762.0h11.597203962364189" stroke="#9bbbe0" stroke-width="1.600"/><path d="M864.3831384445675 767.5h16.387933204754855" stroke="#9bbbe0" stroke-width="1.600"/><path d="M862.7322895321664 773.0h14.893084523104053" stroke="#9bbbe0" stroke-width="1.600"/><path d="M863.5755895114344 778.5h18.501649946881145" stroke="#9bbbe0" stroke-width="1.600"/><rect x="899" y="663" width="12" height="2.600" fill="#7aaee6"/><rect x="911" y="668" width="8" height="2.600" fill="#7aaee6"/><rect x="917" y="672" width="12" height="2.600" fill="#7aaee6"/><rect x="899" y="692" width="46" height="2.600" fill="#7aaee6"/><rect x="902" y="697" width="22" height="2.600" fill="#7aaee6"/><rect x="906" y="702" width="24" height="2.600" fill="#7aaee6"/><rect x="918" y="707" width="28" height="2.600" fill="#7aaee6"/><rect x="926" y="712" width="24" height="2.600" fill="#7aaee6"/><rect x="934" y="716" width="16" height="2.600" fill="#7aaee6"/><rect x="956" y="722" width="4" height="2.600" fill="#7aaee6"/><rect x="900" y="743" width="14" height="2.600" fill="#7aaee6"/><rect x="914" y="748" width="20" height="2.600" fill="#7aaee6"/><rect x="900" y="764" width="52" height="2.600" fill="#7aaee6"/><rect x="906" y="769" width="26" height="2.600" fill="#7aaee6"/><rect x="920" y="773" width="30" height="2.600" fill="#7aaee6"/><rect x="934" y="778" width="24" height="2.600" fill="#7aaee6"/><path d="M988.400 723.200H1150" stroke="#d3e3f5" stroke-width="1.600"/></svg><div class="t" style="left:207.5px;top:530.5px;font-size:17px;font-weight:700;font-style:italic;color:#fff">Isabelle Debost</div><div class="t" style="left:216.5px;top:619.5px;font-size:10.500px;font-style:italic;color:#eef5fc">Experte</div>
<div class="abs" style="left:0;top:858px;width:234px;height:2.6px;background:linear-gradient(#8fb0d0,#5f8bb5)"></div>
<div class="abs" style="left:1133px;top:34px;width:1.1px;height:486px;background:#2f6fb0"></div>
</div>
<div id="pdf">
<div class="abs" style="left:47.4px;top:90.4px;width:77.2px;height:77.2px;border-radius:50%;background:#4878d0"></div>
<div class="pt" style="left:60.600px;top:104.200px;font-family:'DejaVu Sans','Liberation Sans',sans-serif;font-weight:700;font-size:46px;color:#fff;transform-origin:0 0;transform:scaleX(.790);letter-spacing:-1.500px">pd</div>
<div class="abs" style="left:459px;top:95px;width:1.3px;height:18px;background:#222"></div>
<div class="pt" style="left:641.24px;transform:translateX(-50%);top:96.44px;font-size:16.1px;letter-spacing:0.488px;color:#1a1a1a">Échéancier du sous-traitant en Acier d'armature</div>
<div class="pt" style="left:640.37px;transform:translateX(-50%);top:118.44px;font-size:16.1px;letter-spacing:0.739px;color:#1a1a1a">Modifié en date du 2021-08-27</div>
<div class="abs" style="left:100px;top:278px;width:1056px;height:1.1px;background:#dadada"></div>
<div class="abs" style="left:100px;top:326px;width:1056px;height:1.1px;background:#dadada"></div>
<div class="abs" style="left:100px;top:374px;width:1056px;height:1.1px;background:#dadada"></div>
<div class="abs" style="left:100px;top:421px;width:1056px;height:1.1px;background:#dadada"></div>
<div class="abs" style="left:566px;top:231px;width:1.1px;height:213.4000000000001px;background:#dadada"></div>
<div class="abs" style="left:668px;top:231px;width:1.1px;height:213.4000000000001px;background:#dadada"></div>
<div class="abs" style="left:770px;top:231px;width:1.1px;height:213.4000000000001px;background:#dadada"></div>
<div class="abs" style="left:872px;top:231px;width:1.1px;height:213.4000000000001px;background:#dadada"></div>
<div class="abs" style="left:1022px;top:231px;width:1.1px;height:213.4000000000001px;background:#dadada"></div>
<div class="abs" style="left:46px;top:189px;width:1111px;height:1.45px;background:#222"></div>
<div class="abs" style="left:47px;top:230px;width:1109px;height:1.45px;background:#222"></div>
<div class="abs" style="left:46px;top:189.39999999999998px;width:1.45px;height:41.60000000000002px;background:#222"></div>
<div class="abs" style="left:100px;top:189.39999999999998px;width:1.45px;height:41.60000000000002px;background:#222"></div>
<div class="abs" style="left:566px;top:189.39999999999998px;width:1.45px;height:41.60000000000002px;background:#222"></div>
<div class="abs" style="left:668px;top:189.39999999999998px;width:1.45px;height:41.60000000000002px;background:#222"></div>
<div class="abs" style="left:770px;top:189.39999999999998px;width:1.45px;height:41.60000000000002px;background:#222"></div>
<div class="abs" style="left:872px;top:189.39999999999998px;width:1.45px;height:41.60000000000002px;background:#222"></div>
<div class="abs" style="left:1022px;top:189.39999999999998px;width:1.45px;height:41.60000000000002px;background:#222"></div>
<div class="abs" style="left:1156px;top:189.39999999999998px;width:1.45px;height:41.60000000000002px;background:#222"></div>
<div class="abs" style="left:46px;top:189.39999999999998px;width:1.45px;height:255.7500000000001px;background:#222"></div>
<div class="abs" style="left:100px;top:189.39999999999998px;width:1.45px;height:255.0000000000001px;background:#222"></div>
<div class="abs" style="left:47px;top:278px;width:53px;height:1.45px;background:#222"></div>
<div class="abs" style="left:47px;top:326px;width:53px;height:1.45px;background:#222"></div>
<div class="abs" style="left:47px;top:374px;width:53px;height:1.45px;background:#222"></div>
<div class="abs" style="left:47px;top:421px;width:53px;height:1.45px;background:#222"></div>
<div class="abs" style="left:1156px;top:189.39999999999998px;width:1.45px;height:255.7500000000001px;background:#222"></div>
<div class="abs" style="left:47px;top:444px;width:1109px;height:1.45px;background:#222"></div>
<div class="pt" style="left:74.0px;transform:translateX(-50%);top:194.25px;font-size:14.7px;letter-spacing:0px;color:#1a1a1a">N°</div>
<div class="pt" style="left:333.25px;transform:translateX(-50%);top:194.25px;font-size:14.7px;letter-spacing:0.497px;color:#1a1a1a">Nom de la tâche</div>
<div class="pt" style="left:618.47px;transform:translateX(-50%);top:194.25px;font-size:14.7px;letter-spacing:0.943px;color:#1a1a1a">Début</div>
<div class="pt" style="left:720.12px;transform:translateX(-50%);top:194.25px;font-size:14.7px;letter-spacing:0.241px;color:#1a1a1a">Durée</div>
<div class="pt" style="left:821.89px;transform:translateX(-50%);top:194.25px;font-size:14.7px;letter-spacing:-0.21px;color:#1a1a1a">Fin</div>
<div class="pt" style="left:886px;top:194.25px;font-size:14.7px;letter-spacing:0px;color:#1a1a1a">%</div>
<div class="pt" style="left:925px;top:194.25px;font-size:14.7px;letter-spacing:0.395px;color:#1a1a1a">Avancement</div>
<div class="pt" style="left:1090.2px;transform:translateX(-50%);top:194.25px;font-size:14.7px;letter-spacing:0.398px;color:#1a1a1a">Coût ventilé</div>
<div class="pt" style="left:74.57px;transform:translateX(-50%);top:236.55px;font-size:14.7px;letter-spacing:1.149px;color:#1a1a1a">24</div>
<div class="pt" style="left:161px;top:237.16px;font-size:16.6px;letter-spacing:0.6px;color:#1a1a1a">Octroi du sous contrat de Acier d'armature</div>
<div class="pt" style="right:620.49px;top:237.16px;font-size:16.6px;letter-spacing:0.507px;color:#1a1a1a">21-06-02</div>
<div class="pt" style="right:518.21px;top:237.16px;font-size:16.6px;letter-spacing:0.795px;color:#1a1a1a">1 jour</div>
<div class="pt" style="right:416.49px;top:237.16px;font-size:16.6px;letter-spacing:0.507px;color:#1a1a1a">21-06-02</div>
<div class="pt" style="right:134.73px;top:237.16px;font-size:16.6px;letter-spacing:0.269px;color:#1a1a1a">0,00 $</div>
<div class="pt" style="left:74.57px;transform:translateX(-50%);top:284.55px;font-size:14.7px;letter-spacing:1.149px;color:#1a1a1a">61</div>
<div class="pt" style="left:161px;top:285.15px;font-size:16.6px;letter-spacing:0.555px;color:#1a1a1a">Préparation du dessin Acier d'armature</div>
<div class="pt" style="right:620.49px;top:285.15px;font-size:16.6px;letter-spacing:0.507px;color:#1a1a1a">21-06-03</div>
<div class="pt" style="right:518.39px;top:285.15px;font-size:16.6px;letter-spacing:0.613px;color:#1a1a1a">5 jours</div>
<div class="pt" style="right:416.49px;top:285.15px;font-size:16.6px;letter-spacing:0.507px;color:#1a1a1a">21-06-09</div>
<div class="pt" style="right:134.73px;top:285.15px;font-size:16.6px;letter-spacing:0.269px;color:#1a1a1a">0,00 $</div>
<div class="pt" style="left:74.24px;transform:translateX(-50%);top:332.15px;font-size:14.7px;letter-spacing:0.487px;color:#1a1a1a">151</div>
<div class="pt" style="left:161px;top:332.75px;font-size:16.6px;letter-spacing:0.618px;color:#1a1a1a">Fabrication/Livraison Acier d'armature</div>
<div class="pt" style="right:620.49px;top:332.75px;font-size:16.6px;letter-spacing:0.507px;color:#1a1a1a">21-06-18</div>
<div class="pt" style="right:518.39px;top:332.75px;font-size:16.6px;letter-spacing:0.613px;color:#1a1a1a">9 jours</div>
<div class="pt" style="right:416.49px;top:332.75px;font-size:16.6px;letter-spacing:0.507px;color:#1a1a1a">21-07-01</div>
<div class="pt" style="right:134.73px;top:332.75px;font-size:16.6px;letter-spacing:0.269px;color:#1a1a1a">0,00 $</div>
<div class="pt" style="left:74.24px;transform:translateX(-50%);top:379.95px;font-size:14.7px;letter-spacing:0.487px;color:#1a1a1a">180</div>
<div class="pt" style="left:181px;top:380.56px;font-size:16.6px;letter-spacing:0.43px;color:#1a1a1a">Acier d'armature dans les semelles</div>
<div class="pt" style="right:620.49px;top:380.56px;font-size:16.6px;letter-spacing:0.507px;color:#1a1a1a">21-08-30</div>
<div class="pt" style="right:518.21px;top:380.56px;font-size:16.6px;letter-spacing:0.795px;color:#1a1a1a">1 jour</div>
<div class="pt" style="right:416.49px;top:380.56px;font-size:16.6px;letter-spacing:0.507px;color:#1a1a1a">21-08-30</div>
<div class="pt" style="left:875px;top:380.56px;font-size:16.6px;letter-spacing:0.233px;color:#1a1a1a">0,00%</div>
<div class="pt" style="right:134.72px;top:380.56px;font-size:16.6px;letter-spacing:0.282px;color:#1a1a1a">1 250,00 $</div>
<div class="pt" style="left:74.24px;transform:translateX(-50%);top:426.75px;font-size:14.7px;letter-spacing:0.487px;color:#1a1a1a">186</div>
<div class="pt" style="left:181px;top:427.36px;font-size:16.6px;letter-spacing:0.476px;color:#1a1a1a">Acier d'armature dans les murs</div>
<div class="pt" style="right:620.49px;top:427.36px;font-size:16.6px;letter-spacing:0.507px;color:#1a1a1a">21-09-07</div>
<div class="pt" style="right:518.39px;top:427.36px;font-size:16.6px;letter-spacing:0.613px;color:#1a1a1a">2 jours</div>
<div class="pt" style="right:416.49px;top:427.36px;font-size:16.6px;letter-spacing:0.507px;color:#1a1a1a">21-09-08</div>
<div class="pt" style="left:875px;top:427.36px;font-size:16.6px;letter-spacing:0.233px;color:#1a1a1a">0,00%</div>
<div class="pt" style="right:134.72px;top:427.36px;font-size:16.6px;letter-spacing:0.282px;color:#1a1a1a">2 250,00 $</div>
</div>
</body></html>
